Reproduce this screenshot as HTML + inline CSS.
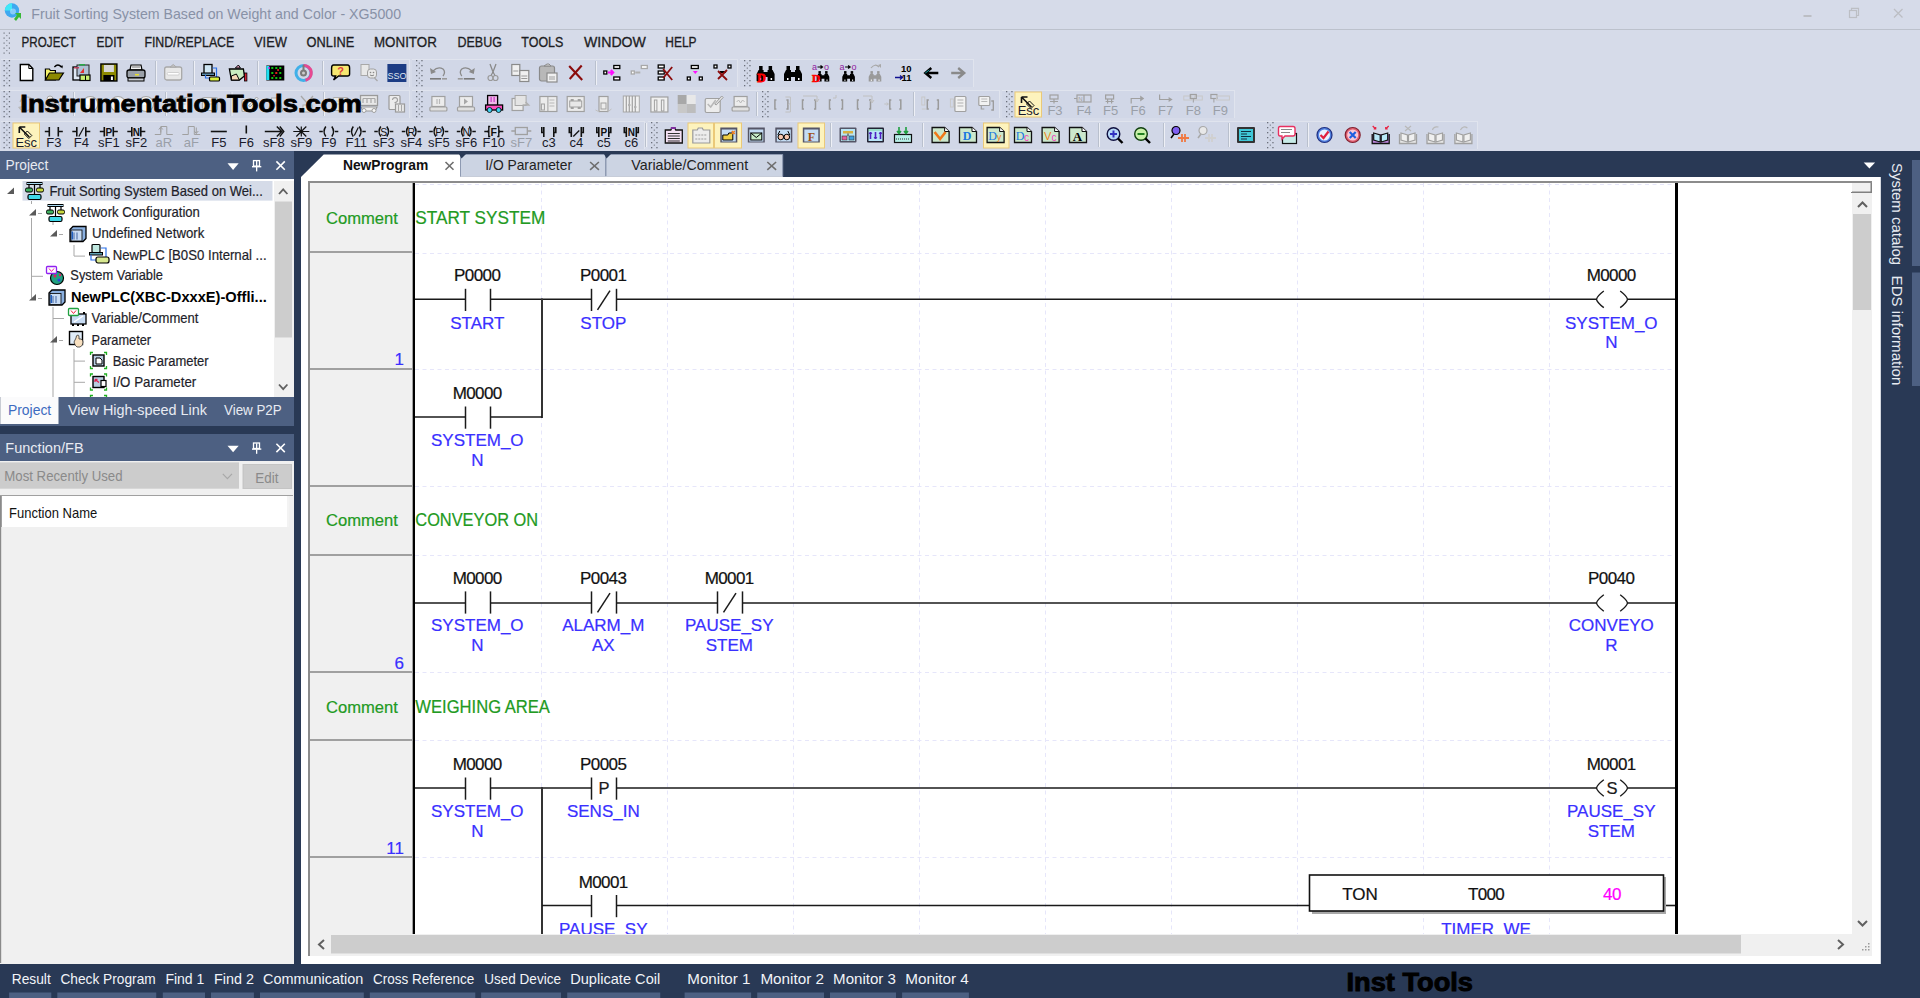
<!DOCTYPE html>
<html><head><meta charset="utf-8">
<style>
*{margin:0;padding:0;box-sizing:border-box}
html,body{width:1920px;height:998px;overflow:hidden;background:#293955;font-family:"Liberation Sans",sans-serif}
.a{position:absolute}
.t{position:absolute;white-space:nowrap}
svg{overflow:hidden}
</style></head><body>
<div class="a" style="left:0;top:0;width:1920px;height:151px;background:#d6dbe9"></div><svg class="a" style="left:0;top:0" width="1920" height="151" font-family="Liberation Sans, sans-serif"><rect x="1" y="59" width="409" height="28" fill="#d1d7e7"/><rect x="1" y="59" width="409" height="1" fill="#e0e4ee"/><rect x="409" y="59" width="1" height="28" fill="#e0e4ee"/><rect x="412" y="59" width="326" height="28" fill="#d1d7e7"/><rect x="412" y="59" width="326" height="1" fill="#e0e4ee"/><rect x="737" y="59" width="1" height="28" fill="#e0e4ee"/><rect x="740" y="59" width="234" height="28" fill="#d1d7e7"/><rect x="740" y="59" width="234" height="1" fill="#e0e4ee"/><rect x="973" y="59" width="1" height="28" fill="#e0e4ee"/><rect x="1" y="90" width="409" height="28" fill="#d1d7e7"/><rect x="1" y="90" width="409" height="1" fill="#e0e4ee"/><rect x="409" y="90" width="1" height="28" fill="#e0e4ee"/><rect x="412" y="90" width="588" height="28" fill="#d1d7e7"/><rect x="412" y="90" width="588" height="1" fill="#e0e4ee"/><rect x="999" y="90" width="1" height="28" fill="#e0e4ee"/><rect x="1002" y="90" width="233" height="28" fill="#d1d7e7"/><rect x="1002" y="90" width="233" height="1" fill="#e0e4ee"/><rect x="1234" y="90" width="1" height="28" fill="#e0e4ee"/><rect x="1" y="121" width="644" height="28" fill="#d1d7e7"/><rect x="1" y="121" width="644" height="1" fill="#e0e4ee"/><rect x="644" y="121" width="1" height="28" fill="#e0e4ee"/><rect x="648" y="121" width="830" height="28" fill="#d1d7e7"/><rect x="648" y="121" width="830" height="1" fill="#e0e4ee"/><rect x="1477" y="121" width="1" height="28" fill="#e0e4ee"/><rect x="3.5" y="60" width="1.3" height="1.3" fill="#6a6f7a"/><rect x="8.8" y="60" width="1.3" height="1.3" fill="#6a6f7a"/><rect x="6.2" y="62.5" width="1.3" height="1.3" fill="#8a8f9a"/><rect x="3.5" y="65" width="1.3" height="1.3" fill="#6a6f7a"/><rect x="8.8" y="65" width="1.3" height="1.3" fill="#6a6f7a"/><rect x="6.2" y="67.5" width="1.3" height="1.3" fill="#8a8f9a"/><rect x="3.5" y="70" width="1.3" height="1.3" fill="#6a6f7a"/><rect x="8.8" y="70" width="1.3" height="1.3" fill="#6a6f7a"/><rect x="6.2" y="72.5" width="1.3" height="1.3" fill="#8a8f9a"/><rect x="3.5" y="75" width="1.3" height="1.3" fill="#6a6f7a"/><rect x="8.8" y="75" width="1.3" height="1.3" fill="#6a6f7a"/><rect x="6.2" y="77.5" width="1.3" height="1.3" fill="#8a8f9a"/><rect x="3.5" y="80" width="1.3" height="1.3" fill="#6a6f7a"/><rect x="8.8" y="80" width="1.3" height="1.3" fill="#6a6f7a"/><rect x="6.2" y="82.5" width="1.3" height="1.3" fill="#8a8f9a"/><rect x="3.5" y="85" width="1.3" height="1.3" fill="#6a6f7a"/><rect x="8.8" y="85" width="1.3" height="1.3" fill="#6a6f7a"/><rect x="3.5" y="91" width="1.3" height="1.3" fill="#6a6f7a"/><rect x="8.8" y="91" width="1.3" height="1.3" fill="#6a6f7a"/><rect x="6.2" y="93.5" width="1.3" height="1.3" fill="#8a8f9a"/><rect x="3.5" y="96" width="1.3" height="1.3" fill="#6a6f7a"/><rect x="8.8" y="96" width="1.3" height="1.3" fill="#6a6f7a"/><rect x="6.2" y="98.5" width="1.3" height="1.3" fill="#8a8f9a"/><rect x="3.5" y="101" width="1.3" height="1.3" fill="#6a6f7a"/><rect x="8.8" y="101" width="1.3" height="1.3" fill="#6a6f7a"/><rect x="6.2" y="103.5" width="1.3" height="1.3" fill="#8a8f9a"/><rect x="3.5" y="106" width="1.3" height="1.3" fill="#6a6f7a"/><rect x="8.8" y="106" width="1.3" height="1.3" fill="#6a6f7a"/><rect x="6.2" y="108.5" width="1.3" height="1.3" fill="#8a8f9a"/><rect x="3.5" y="111" width="1.3" height="1.3" fill="#6a6f7a"/><rect x="8.8" y="111" width="1.3" height="1.3" fill="#6a6f7a"/><rect x="6.2" y="113.5" width="1.3" height="1.3" fill="#8a8f9a"/><rect x="3.5" y="116" width="1.3" height="1.3" fill="#6a6f7a"/><rect x="8.8" y="116" width="1.3" height="1.3" fill="#6a6f7a"/><rect x="3.5" y="122" width="1.3" height="1.3" fill="#6a6f7a"/><rect x="8.8" y="122" width="1.3" height="1.3" fill="#6a6f7a"/><rect x="6.2" y="124.5" width="1.3" height="1.3" fill="#8a8f9a"/><rect x="3.5" y="127" width="1.3" height="1.3" fill="#6a6f7a"/><rect x="8.8" y="127" width="1.3" height="1.3" fill="#6a6f7a"/><rect x="6.2" y="129.5" width="1.3" height="1.3" fill="#8a8f9a"/><rect x="3.5" y="132" width="1.3" height="1.3" fill="#6a6f7a"/><rect x="8.8" y="132" width="1.3" height="1.3" fill="#6a6f7a"/><rect x="6.2" y="134.5" width="1.3" height="1.3" fill="#8a8f9a"/><rect x="3.5" y="137" width="1.3" height="1.3" fill="#6a6f7a"/><rect x="8.8" y="137" width="1.3" height="1.3" fill="#6a6f7a"/><rect x="6.2" y="139.5" width="1.3" height="1.3" fill="#8a8f9a"/><rect x="3.5" y="142" width="1.3" height="1.3" fill="#6a6f7a"/><rect x="8.8" y="142" width="1.3" height="1.3" fill="#6a6f7a"/><rect x="6.2" y="144.5" width="1.3" height="1.3" fill="#8a8f9a"/><rect x="3.5" y="147" width="1.3" height="1.3" fill="#6a6f7a"/><rect x="8.8" y="147" width="1.3" height="1.3" fill="#6a6f7a"/><rect x="416" y="60" width="1.3" height="1.3" fill="#6a6f7a"/><rect x="421.3" y="60" width="1.3" height="1.3" fill="#6a6f7a"/><rect x="418.7" y="62.5" width="1.3" height="1.3" fill="#8a8f9a"/><rect x="416" y="65" width="1.3" height="1.3" fill="#6a6f7a"/><rect x="421.3" y="65" width="1.3" height="1.3" fill="#6a6f7a"/><rect x="418.7" y="67.5" width="1.3" height="1.3" fill="#8a8f9a"/><rect x="416" y="70" width="1.3" height="1.3" fill="#6a6f7a"/><rect x="421.3" y="70" width="1.3" height="1.3" fill="#6a6f7a"/><rect x="418.7" y="72.5" width="1.3" height="1.3" fill="#8a8f9a"/><rect x="416" y="75" width="1.3" height="1.3" fill="#6a6f7a"/><rect x="421.3" y="75" width="1.3" height="1.3" fill="#6a6f7a"/><rect x="418.7" y="77.5" width="1.3" height="1.3" fill="#8a8f9a"/><rect x="416" y="80" width="1.3" height="1.3" fill="#6a6f7a"/><rect x="421.3" y="80" width="1.3" height="1.3" fill="#6a6f7a"/><rect x="418.7" y="82.5" width="1.3" height="1.3" fill="#8a8f9a"/><rect x="416" y="85" width="1.3" height="1.3" fill="#6a6f7a"/><rect x="421.3" y="85" width="1.3" height="1.3" fill="#6a6f7a"/><rect x="416" y="91" width="1.3" height="1.3" fill="#6a6f7a"/><rect x="421.3" y="91" width="1.3" height="1.3" fill="#6a6f7a"/><rect x="418.7" y="93.5" width="1.3" height="1.3" fill="#8a8f9a"/><rect x="416" y="96" width="1.3" height="1.3" fill="#6a6f7a"/><rect x="421.3" y="96" width="1.3" height="1.3" fill="#6a6f7a"/><rect x="418.7" y="98.5" width="1.3" height="1.3" fill="#8a8f9a"/><rect x="416" y="101" width="1.3" height="1.3" fill="#6a6f7a"/><rect x="421.3" y="101" width="1.3" height="1.3" fill="#6a6f7a"/><rect x="418.7" y="103.5" width="1.3" height="1.3" fill="#8a8f9a"/><rect x="416" y="106" width="1.3" height="1.3" fill="#6a6f7a"/><rect x="421.3" y="106" width="1.3" height="1.3" fill="#6a6f7a"/><rect x="418.7" y="108.5" width="1.3" height="1.3" fill="#8a8f9a"/><rect x="416" y="111" width="1.3" height="1.3" fill="#6a6f7a"/><rect x="421.3" y="111" width="1.3" height="1.3" fill="#6a6f7a"/><rect x="418.7" y="113.5" width="1.3" height="1.3" fill="#8a8f9a"/><rect x="416" y="116" width="1.3" height="1.3" fill="#6a6f7a"/><rect x="421.3" y="116" width="1.3" height="1.3" fill="#6a6f7a"/><rect x="744" y="60" width="1.3" height="1.3" fill="#6a6f7a"/><rect x="749.3" y="60" width="1.3" height="1.3" fill="#6a6f7a"/><rect x="746.7" y="62.5" width="1.3" height="1.3" fill="#8a8f9a"/><rect x="744" y="65" width="1.3" height="1.3" fill="#6a6f7a"/><rect x="749.3" y="65" width="1.3" height="1.3" fill="#6a6f7a"/><rect x="746.7" y="67.5" width="1.3" height="1.3" fill="#8a8f9a"/><rect x="744" y="70" width="1.3" height="1.3" fill="#6a6f7a"/><rect x="749.3" y="70" width="1.3" height="1.3" fill="#6a6f7a"/><rect x="746.7" y="72.5" width="1.3" height="1.3" fill="#8a8f9a"/><rect x="744" y="75" width="1.3" height="1.3" fill="#6a6f7a"/><rect x="749.3" y="75" width="1.3" height="1.3" fill="#6a6f7a"/><rect x="746.7" y="77.5" width="1.3" height="1.3" fill="#8a8f9a"/><rect x="744" y="80" width="1.3" height="1.3" fill="#6a6f7a"/><rect x="749.3" y="80" width="1.3" height="1.3" fill="#6a6f7a"/><rect x="746.7" y="82.5" width="1.3" height="1.3" fill="#8a8f9a"/><rect x="744" y="85" width="1.3" height="1.3" fill="#6a6f7a"/><rect x="749.3" y="85" width="1.3" height="1.3" fill="#6a6f7a"/><rect x="762" y="91" width="1.3" height="1.3" fill="#6a6f7a"/><rect x="767.3" y="91" width="1.3" height="1.3" fill="#6a6f7a"/><rect x="764.7" y="93.5" width="1.3" height="1.3" fill="#8a8f9a"/><rect x="762" y="96" width="1.3" height="1.3" fill="#6a6f7a"/><rect x="767.3" y="96" width="1.3" height="1.3" fill="#6a6f7a"/><rect x="764.7" y="98.5" width="1.3" height="1.3" fill="#8a8f9a"/><rect x="762" y="101" width="1.3" height="1.3" fill="#6a6f7a"/><rect x="767.3" y="101" width="1.3" height="1.3" fill="#6a6f7a"/><rect x="764.7" y="103.5" width="1.3" height="1.3" fill="#8a8f9a"/><rect x="762" y="106" width="1.3" height="1.3" fill="#6a6f7a"/><rect x="767.3" y="106" width="1.3" height="1.3" fill="#6a6f7a"/><rect x="764.7" y="108.5" width="1.3" height="1.3" fill="#8a8f9a"/><rect x="762" y="111" width="1.3" height="1.3" fill="#6a6f7a"/><rect x="767.3" y="111" width="1.3" height="1.3" fill="#6a6f7a"/><rect x="764.7" y="113.5" width="1.3" height="1.3" fill="#8a8f9a"/><rect x="762" y="116" width="1.3" height="1.3" fill="#6a6f7a"/><rect x="767.3" y="116" width="1.3" height="1.3" fill="#6a6f7a"/><rect x="1006" y="91" width="1.3" height="1.3" fill="#6a6f7a"/><rect x="1011.3" y="91" width="1.3" height="1.3" fill="#6a6f7a"/><rect x="1008.7" y="93.5" width="1.3" height="1.3" fill="#8a8f9a"/><rect x="1006" y="96" width="1.3" height="1.3" fill="#6a6f7a"/><rect x="1011.3" y="96" width="1.3" height="1.3" fill="#6a6f7a"/><rect x="1008.7" y="98.5" width="1.3" height="1.3" fill="#8a8f9a"/><rect x="1006" y="101" width="1.3" height="1.3" fill="#6a6f7a"/><rect x="1011.3" y="101" width="1.3" height="1.3" fill="#6a6f7a"/><rect x="1008.7" y="103.5" width="1.3" height="1.3" fill="#8a8f9a"/><rect x="1006" y="106" width="1.3" height="1.3" fill="#6a6f7a"/><rect x="1011.3" y="106" width="1.3" height="1.3" fill="#6a6f7a"/><rect x="1008.7" y="108.5" width="1.3" height="1.3" fill="#8a8f9a"/><rect x="1006" y="111" width="1.3" height="1.3" fill="#6a6f7a"/><rect x="1011.3" y="111" width="1.3" height="1.3" fill="#6a6f7a"/><rect x="1008.7" y="113.5" width="1.3" height="1.3" fill="#8a8f9a"/><rect x="1006" y="116" width="1.3" height="1.3" fill="#6a6f7a"/><rect x="1011.3" y="116" width="1.3" height="1.3" fill="#6a6f7a"/><rect x="651" y="122" width="1.3" height="1.3" fill="#6a6f7a"/><rect x="656.3" y="122" width="1.3" height="1.3" fill="#6a6f7a"/><rect x="653.7" y="124.5" width="1.3" height="1.3" fill="#8a8f9a"/><rect x="651" y="127" width="1.3" height="1.3" fill="#6a6f7a"/><rect x="656.3" y="127" width="1.3" height="1.3" fill="#6a6f7a"/><rect x="653.7" y="129.5" width="1.3" height="1.3" fill="#8a8f9a"/><rect x="651" y="132" width="1.3" height="1.3" fill="#6a6f7a"/><rect x="656.3" y="132" width="1.3" height="1.3" fill="#6a6f7a"/><rect x="653.7" y="134.5" width="1.3" height="1.3" fill="#8a8f9a"/><rect x="651" y="137" width="1.3" height="1.3" fill="#6a6f7a"/><rect x="656.3" y="137" width="1.3" height="1.3" fill="#6a6f7a"/><rect x="653.7" y="139.5" width="1.3" height="1.3" fill="#8a8f9a"/><rect x="651" y="142" width="1.3" height="1.3" fill="#6a6f7a"/><rect x="656.3" y="142" width="1.3" height="1.3" fill="#6a6f7a"/><rect x="653.7" y="144.5" width="1.3" height="1.3" fill="#8a8f9a"/><rect x="651" y="147" width="1.3" height="1.3" fill="#6a6f7a"/><rect x="656.3" y="147" width="1.3" height="1.3" fill="#6a6f7a"/><rect x="1267" y="122" width="1.3" height="1.3" fill="#6a6f7a"/><rect x="1272.3" y="122" width="1.3" height="1.3" fill="#6a6f7a"/><rect x="1269.7" y="124.5" width="1.3" height="1.3" fill="#8a8f9a"/><rect x="1267" y="127" width="1.3" height="1.3" fill="#6a6f7a"/><rect x="1272.3" y="127" width="1.3" height="1.3" fill="#6a6f7a"/><rect x="1269.7" y="129.5" width="1.3" height="1.3" fill="#8a8f9a"/><rect x="1267" y="132" width="1.3" height="1.3" fill="#6a6f7a"/><rect x="1272.3" y="132" width="1.3" height="1.3" fill="#6a6f7a"/><rect x="1269.7" y="134.5" width="1.3" height="1.3" fill="#8a8f9a"/><rect x="1267" y="137" width="1.3" height="1.3" fill="#6a6f7a"/><rect x="1272.3" y="137" width="1.3" height="1.3" fill="#6a6f7a"/><rect x="1269.7" y="139.5" width="1.3" height="1.3" fill="#8a8f9a"/><rect x="1267" y="142" width="1.3" height="1.3" fill="#6a6f7a"/><rect x="1272.3" y="142" width="1.3" height="1.3" fill="#6a6f7a"/><rect x="1269.7" y="144.5" width="1.3" height="1.3" fill="#8a8f9a"/><rect x="1267" y="147" width="1.3" height="1.3" fill="#6a6f7a"/><rect x="1272.3" y="147" width="1.3" height="1.3" fill="#6a6f7a"/><rect x="155" y="61" width="1" height="24" fill="#b9c0cd"/><rect x="156" y="61" width="1" height="24" fill="#eef0f6"/><rect x="193" y="61" width="1" height="24" fill="#b9c0cd"/><rect x="194" y="61" width="1" height="24" fill="#eef0f6"/><rect x="257" y="61" width="1" height="24" fill="#b9c0cd"/><rect x="258" y="61" width="1" height="24" fill="#eef0f6"/><rect x="322" y="61" width="1" height="24" fill="#b9c0cd"/><rect x="323" y="61" width="1" height="24" fill="#eef0f6"/><rect x="595" y="61" width="1" height="24" fill="#b9c0cd"/><rect x="596" y="61" width="1" height="24" fill="#eef0f6"/><rect x="73" y="92" width="1" height="24" fill="#b9c0cd"/><rect x="74" y="92" width="1" height="24" fill="#eef0f6"/><rect x="165" y="92" width="1" height="24" fill="#b9c0cd"/><rect x="166" y="92" width="1" height="24" fill="#eef0f6"/><rect x="230.5" y="92" width="1" height="24" fill="#b9c0cd"/><rect x="231.5" y="92" width="1" height="24" fill="#eef0f6"/><rect x="323" y="92" width="1" height="24" fill="#b9c0cd"/><rect x="324" y="92" width="1" height="24" fill="#eef0f6"/><rect x="756" y="92" width="1" height="24" fill="#b9c0cd"/><rect x="757" y="92" width="1" height="24" fill="#eef0f6"/><rect x="913" y="92" width="1" height="24" fill="#b9c0cd"/><rect x="914" y="92" width="1" height="24" fill="#eef0f6"/><rect x="645" y="123" width="1" height="24" fill="#b9c0cd"/><rect x="646" y="123" width="1" height="24" fill="#eef0f6"/><rect x="830" y="123" width="1" height="24" fill="#b9c0cd"/><rect x="831" y="123" width="1" height="24" fill="#eef0f6"/><rect x="922" y="123" width="1" height="24" fill="#b9c0cd"/><rect x="923" y="123" width="1" height="24" fill="#eef0f6"/><rect x="1098" y="123" width="1" height="24" fill="#b9c0cd"/><rect x="1099" y="123" width="1" height="24" fill="#eef0f6"/><rect x="1163" y="123" width="1" height="24" fill="#b9c0cd"/><rect x="1164" y="123" width="1" height="24" fill="#eef0f6"/><rect x="1228" y="123" width="1" height="24" fill="#b9c0cd"/><rect x="1229" y="123" width="1" height="24" fill="#eef0f6"/><rect x="1307" y="123" width="1" height="24" fill="#b9c0cd"/><rect x="1308" y="123" width="1" height="24" fill="#eef0f6"/><rect x="13.0" y="123.0" width="26.5" height="25.0" fill="#fdf3bd" stroke="#ebc978" stroke-width="1"/><rect x="688.0" y="123.0" width="25.5" height="25.0" fill="#fdf3bd" stroke="#ebc978" stroke-width="1"/><rect x="714.5" y="123.0" width="27" height="25.0" fill="#fdf3bd" stroke="#ebc978" stroke-width="1"/><rect x="798.0" y="123.0" width="26.5" height="25.0" fill="#fdf3bd" stroke="#ebc978" stroke-width="1"/><rect x="983.5" y="123.0" width="25.5" height="25.0" fill="#fdf3bd" stroke="#ebc978" stroke-width="1"/><rect x="1015.0" y="92.0" width="26.5" height="25.0" fill="#fdf3bd" stroke="#ebc978" stroke-width="1"/><g transform="translate(16.8,63)"><path d="M3.5 1.5H12L16 5.5V17.5H3.5Z" fill="#fff" stroke="#000" stroke-width="1.4"/><path d="M12 1.5V5.5H16" fill="none" stroke="#000" stroke-width="1"/></g><g transform="translate(44.4,63)"><path d="M1 6H5L6 7.5H11V17H1Z" fill="#f4f26a" stroke="#000" stroke-width="1.2"/><path d="M1 17L5 10H19L14.5 17Z" fill="#8d8a00" stroke="#000" stroke-width="1.2"/><path d="M10 4Q13.5 0 17 4" fill="none" stroke="#000" stroke-width="1.3"/><path d="M15.5 3L18 5.5L18.5 2.5Z" fill="#000"/></g><g transform="translate(72,63)"><rect x="1" y="4" width="11" height="13" fill="#dfe9f5" stroke="#000" stroke-width="1.3"/><rect x="5" y="2" width="12" height="11" fill="#aebfd4" stroke="#222" stroke-width="1"/><rect x="2" y="4" width="5" height="1.5" fill="#b8405a"/><rect x="7" y="1" width="6" height="1.6" fill="#2aa84a"/><rect x="8" y="12" width="10" height="5.5" fill="#c8f070" stroke="#000" stroke-width="1.2"/><rect x="13" y="12.5" width="1" height="4.5" fill="#000"/><path d="M12 5L12 10L8 10Z" fill="#e03030"/></g><g transform="translate(98.9,63)"><rect x="2" y="1" width="16" height="17" fill="#8d8a00" stroke="#000" stroke-width="1.4"/><rect x="5" y="2" width="10" height="7" fill="#d8d8d8"/><rect x="4.5" y="12" width="11" height="6" fill="#000"/><rect x="12" y="13.5" width="2" height="3.5" fill="#fff"/></g><g transform="translate(126,63)"><path d="M5 2H15L16 7H4Z" fill="#f4f4f4" stroke="#000" stroke-width="1.2"/><rect x="1" y="7" width="18" height="8" rx="2" fill="#9aa0a8" stroke="#000" stroke-width="1.3"/><rect x="2" y="15" width="16" height="3" fill="#c8ccd2" stroke="#000" stroke-width="1"/><rect x="9" y="11" width="4" height="1.5" fill="#e8e030"/><line x1="6" y1="4" x2="14" y2="4" stroke="#555" stroke-width="0.8"/></g><g transform="translate(163.2,63)"><rect x="1.5" y="4" width="17" height="13" rx="2" fill="#e8e8e8" stroke="#a8a8a8" stroke-width="1.3"/><path d="M7 4L10 1.5L13 4Z" fill="#c8c8c8" stroke="#a8a8a8"/><rect x="4" y="9.5" width="12" height="2.5" rx="1" fill="#fff" stroke="#c8c8c8" stroke-width="0.8"/></g><g transform="translate(200.5,63)"><rect x="3.5" y="1.5" width="8" height="9" fill="#cfe6f4" stroke="#000" stroke-width="1.3"/><rect x="1" y="10" width="13" height="2.5" fill="#5a8aa8" stroke="#000" stroke-width="1"/><path d="M12 5H16V15H5V12" fill="none" stroke="#2a70e8" stroke-width="1.2"/><rect x="9" y="14" width="10" height="4" rx="1" fill="#d8f040" stroke="#000" stroke-width="1.2"/></g><g transform="translate(228.4,63)"><path d="M1 6H15L16 13L11 17H3Z" fill="#c8ecc0" stroke="#000" stroke-width="1.3"/><path d="M7 5L10 2L12 5Z" fill="#e8a0c0" stroke="#000" stroke-width="1"/><path d="M3 13L8 11L11 17H3Z" fill="#f4d8b8" stroke="#000" stroke-width="1"/><rect x="16" y="10" width="2.5" height="8" fill="#d02030" stroke="#000" stroke-width="0.8"/></g><g transform="translate(265.3,63)"><rect x="1" y="2.5" width="18" height="15" fill="#000"/><rect x="1" y="3" width="3" height="14" fill="#20e0f0"/><g fill="#10c010"><rect x="6" y="4" width="2" height="2"/><rect x="10" y="4" width="2" height="2"/><rect x="14" y="4" width="2" height="2"/><rect x="6" y="9" width="2" height="2"/><rect x="14" y="9" width="2" height="2"/><rect x="6" y="14" width="2" height="2"/><rect x="10" y="14" width="2" height="2"/><rect x="14" y="14" width="2" height="2"/></g><g fill="#e02020"><rect x="10" y="9" width="2" height="2"/><rect x="12" y="6" width="1.5" height="2"/><rect x="8" y="12" width="1.5" height="1.5"/></g><rect x="3" y="4" width="1.5" height="2" fill="#e020e0"/></g><g transform="translate(293.5,63)"><circle cx="10" cy="10" r="7.5" fill="none" stroke="#40b0e8" stroke-width="3"/><path d="M10 2.5A7.5 7.5 0 0 1 12 17.3" fill="none" stroke="#e84890" stroke-width="3"/><circle cx="10" cy="10" r="3.5" fill="#7a7a7a"/><circle cx="10" cy="10" r="1.5" fill="#ccc"/><rect x="9" y="2" width="2" height="5" fill="#7a7a7a"/></g><g transform="translate(330.6,63)"><path d="M3 2H17Q19 2 19 5V11Q19 13 17 13H8L3 17L5 13H3Q1 13 1 11V5Q1 2 3 2Z" fill="#f7e870" stroke="#000" stroke-width="1.4"/><text x="10" y="11.5" font-size="11" fill="#e04040" text-anchor="middle" font-weight="bold">?</text></g><g transform="translate(359.5,63)"><rect x="1.5" y="1.5" width="8" height="11" fill="#e8e8e8" stroke="#a8a8a8"/><rect x="8" y="6" width="9" height="9" rx="3" fill="#e8e8e8" stroke="#a0a0a0"/><circle cx="11" cy="9.5" r="0.8" fill="#888"/><circle cx="14" cy="9.5" r="0.8" fill="#888"/><path d="M10.5 12Q12.5 13.5 14.5 12" fill="none" stroke="#888"/><path d="M15 15L18 18" stroke="#a8a8a8" stroke-width="1.3"/></g><g transform="translate(386.9,63)"><rect x="0.5" y="1" width="19" height="18" fill="#1c3c84"/><text x="10" y="15.5" font-size="9" fill="#dfe6f2" text-anchor="middle">SSO</text></g><g transform="translate(428,63)"><path d="M5 8Q10 3 15 6Q18 9 15 13" fill="none" stroke="#8a8a8a" stroke-width="1.3"/><path d="M2 5L3 11L8 9Z" fill="#8a8a8a"/><rect x="2" y="15" width="11" height="1.6" fill="#7a7a7a"/><rect x="14" y="15" width="5" height="1.6" fill="#9a9a9a"/></g><g transform="translate(456.8,63)"><path d="M15 8Q10 3 5 6Q2 9 5 13" fill="none" stroke="#8a8a8a" stroke-width="1.3"/><path d="M18 5L17 11L12 9Z" fill="#8a8a8a"/><rect x="7" y="15" width="11" height="1.6" fill="#7a7a7a"/><rect x="1" y="15" width="5" height="1.6" fill="#9a9a9a"/></g><g transform="translate(483,63)"><path d="M7 1L10 9L13 1" fill="none" stroke="#8a8a8a" stroke-width="1.3"/><circle cx="7.5" cy="15" r="2.5" fill="none" stroke="#9a9a9a" stroke-width="1.2"/><circle cx="12.5" cy="15" r="2.5" fill="none" stroke="#9a9a9a" stroke-width="1.2"/><path d="M10 9L8 12.5M10 9L12 12.5" stroke="#8a8a8a" stroke-width="1.2"/></g><g transform="translate(510.29999999999995,63)"><rect x="1.5" y="1.5" width="8" height="11" fill="#f0f0f0" stroke="#8a8a8a" stroke-width="1.2"/><rect x="9.5" y="7.5" width="9" height="11" fill="#f0f0f0" stroke="#8a8a8a" stroke-width="1.2"/><path d="M3 8H8M11 13H17M11 15.5H17" stroke="#9a9a9a"/></g><g transform="translate(538,63)"><rect x="1.5" y="3" width="15" height="15" rx="2" fill="#b8b8b8" stroke="#8a8a8a" stroke-width="1.2"/><path d="M6 3L9 1H11L13 3Z" fill="#d8d8d8" stroke="#8a8a8a"/><rect x="9" y="10" width="10" height="9" fill="#f0f0f0" stroke="#8a8a8a" stroke-width="1.2"/><path d="M11 14H17M11 16H17" stroke="#a0a0a0"/></g><g transform="translate(565.7,63)"><path d="M3.5 3L16.5 17M16 2.5L4 16" stroke="#8b0c0c" stroke-width="2.1"/></g><g transform="translate(602.8,63)"><rect x="1" y="8" width="3" height="3" fill="#fff" stroke="#000" stroke-width="1.3"/><rect x="11" y="2.5" width="6" height="3" fill="#fff" stroke="#000" stroke-width="1.3"/><rect x="11" y="14" width="6" height="3" fill="#fff" stroke="#000" stroke-width="1.3"/><path d="M5 9.5H10M8 7L10.5 9.5L8 12" stroke="#ff10ff" stroke-width="2" fill="none"/></g><g transform="translate(630.3,63)"><rect x="1" y="8" width="3" height="3" fill="#fff" stroke="#a8a8a8" stroke-width="1.3"/><rect x="11" y="2.5" width="6" height="3" fill="#fff" stroke="#a8a8a8" stroke-width="1.3"/><path d="M5 9.5H10" stroke="#b0b0b0" stroke-width="2"/></g><g transform="translate(657.2,63)"><rect x="1" y="2" width="6" height="3" fill="#fff" stroke="#000" stroke-width="1.3"/><rect x="1" y="8" width="6" height="3" fill="#fff" stroke="#000" stroke-width="1.3"/><rect x="1" y="14" width="6" height="3" fill="#fff" stroke="#000" stroke-width="1.3"/><path d="M6 6L15 17M15 4L6 15" stroke="#8b0c0c" stroke-width="1.8"/></g><g transform="translate(685.3,63)"><rect x="6" y="2.5" width="7" height="3" fill="#fff" stroke="#000" stroke-width="1.3"/><rect x="2" y="14" width="3" height="3" fill="#fff" stroke="#000" stroke-width="1.3"/><rect x="14" y="14" width="3" height="3" fill="#fff" stroke="#000" stroke-width="1.3"/><path d="M7.5 8H12.5L10 11Z" fill="#ff10ff"/></g><g transform="translate(713,63)"><rect x="1" y="2" width="3" height="3" fill="#fff" stroke="#000" stroke-width="1.3"/><rect x="15" y="2" width="3" height="3" fill="#fff" stroke="#000" stroke-width="1.3"/><rect x="7" y="8" width="6" height="2" fill="#000"/><path d="M5 8L14 17M14 7L5 16" stroke="#8b0c0c" stroke-width="1.8"/></g><g transform="translate(755.6,63)"><path d="M3 7H8V18H1V11Z M12 7H17L19 11V18H12Z M7 9H13V14H7Z" fill="#000"/><rect x="3.5" y="3" width="3.5" height="4" fill="#000"/><rect x="13" y="3" width="3.5" height="4" fill="#000"/><rect x="4" y="15" width="1.5" height="2" fill="#fff"/><rect x="15" y="15" width="1.5" height="2" fill="#fff"/><text x="6" y="19" font-size="12" font-weight="bold" fill="#ff0000" font-family="Liberation Serif" text-anchor="middle" stroke="#ff0000" stroke-width="0.8">D</text></g><g transform="translate(783,63)"><path d="M3 7H8V18H1V11Z M12 7H17L19 11V18H12Z M7 9H13V14H7Z" fill="#000"/><rect x="3.5" y="3" width="3.5" height="4" fill="#000"/><rect x="13" y="3" width="3.5" height="4" fill="#000"/><rect x="4" y="15" width="1.5" height="2" fill="#fff"/><rect x="15" y="15" width="1.5" height="2" fill="#fff"/></g><g transform="translate(811,63)"><g transform="translate(5,6) scale(0.7)"><path d="M3 7H8V18H1V11Z M12 7H17L19 11V18H12Z M7 9H13V14H7Z" fill="#000"/><rect x="3.5" y="3" width="3.5" height="4" fill="#000"/><rect x="13" y="3" width="3.5" height="4" fill="#000"/><rect x="4" y="15" width="1.5" height="2" fill="#fff"/><rect x="15" y="15" width="1.5" height="2" fill="#fff"/></g><text x="1" y="7" font-size="9" fill="#9020a0">a</text><text x="13" y="7" font-size="9" fill="#9020a0">o</text><path d="M6.5 4H11M9.5 2.5L11.5 4L9.5 5.5" stroke="#000" stroke-width="1.2" fill="none"/><text x="5" y="19" font-size="11" font-weight="bold" fill="#ff0000" font-family="Liberation Serif" text-anchor="middle" stroke="#ff0000" stroke-width="0.7">D</text></g><g transform="translate(838.6,63)"><g transform="translate(3,6) scale(0.7)"><path d="M3 7H8V18H1V11Z M12 7H17L19 11V18H12Z M7 9H13V14H7Z" fill="#000"/><rect x="3.5" y="3" width="3.5" height="4" fill="#000"/><rect x="13" y="3" width="3.5" height="4" fill="#000"/><rect x="4" y="15" width="1.5" height="2" fill="#fff"/><rect x="15" y="15" width="1.5" height="2" fill="#fff"/></g><text x="1" y="7" font-size="9" fill="#9020a0">a</text><text x="13" y="7" font-size="9" fill="#9020a0">o</text><path d="M6.5 4H11M9.5 2.5L11.5 4L9.5 5.5" stroke="#000" stroke-width="1.2" fill="none"/></g><g transform="translate(865,63)"><g transform="translate(3,6) scale(0.7)"><path d="M3 7H8V18H1V11Z M12 7H17L19 11V18H12Z M7 9H13V14H7Z" fill="#9a9a9a"/><rect x="3.5" y="3" width="3.5" height="4" fill="#9a9a9a"/><rect x="13" y="3" width="3.5" height="4" fill="#9a9a9a"/><rect x="4" y="15" width="1.5" height="2" fill="#fff"/><rect x="15" y="15" width="1.5" height="2" fill="#fff"/></g><path d="M6 5Q10 0 14 4" fill="none" stroke="#a8a8a8" stroke-width="1.2"/><path d="M13 2L16 5L16 1Z" fill="#a8a8a8"/></g><g transform="translate(894,63)"><text x="17.5" y="8.5" font-size="9.5" fill="#000" text-anchor="end" font-weight="bold">10</text><text x="17.5" y="18" font-size="9.5" fill="#000" text-anchor="end" font-weight="bold">11</text><path d="M1 14.5H8M6 12.5L8.5 14.5L6 16.5" stroke="#101090" stroke-width="1.3" fill="none"/></g><g transform="translate(921.3,63)"><path d="M17 10H5M10 5L4 10L10 15" stroke="#000" stroke-width="2.4" fill="none"/><path d="M4 10L8 7" stroke="#10a0a0" stroke-width="1"/></g><g transform="translate(948.2,63)"><path d="M3 10H15M10 5L16 10L10 15" stroke="#8a8a8a" stroke-width="2.4" fill="none"/></g><g transform="translate(16,94)"><path d="M4 8Q6 3 11 3Q15 3 17 7M16 12Q14 17 9 17Q5 17 3 13" fill="none" stroke="#b8b8b8" stroke-width="1.3"/><path d="M15 4L18 7L14 8Z M5 16L2 13L6 12Z" fill="#b8b8b8"/></g><g transform="translate(42,94)"><circle cx="8" cy="5" r="3" fill="#f0f0f0" stroke="#a8a8a8"/><rect x="3" y="9" width="14" height="9" rx="2" fill="#e0e0e0" stroke="#a8a8a8"/></g><g transform="translate(80.3,94)"><circle cx="10" cy="10" r="7.5" fill="#f4f4f4" stroke="#a8a8a8" stroke-width="1.2"/><circle cx="8" cy="8" r="3" fill="#fff"/></g><g transform="translate(108,94)"><circle cx="10" cy="10" r="7.5" fill="#f4f4f4" stroke="#a8a8a8" stroke-width="1.2"/><circle cx="8" cy="8" r="3" fill="#fff"/></g><g transform="translate(136,94)"><circle cx="10" cy="10" r="7.5" fill="#f4f4f4" stroke="#a8a8a8" stroke-width="1.2"/><circle cx="8" cy="8" r="3" fill="#fff"/></g><g transform="translate(173.5,94)"><rect x="2.5" y="3.5" width="15" height="13" rx="1.5" fill="#ececec" stroke="#b0b0b0" stroke-width="1.2"/><path d="M5 7H15M5 10H12" stroke="#c8c8c8"/></g><g transform="translate(200,94)"><rect x="2.5" y="3.5" width="15" height="13" rx="1.5" fill="#ececec" stroke="#b0b0b0" stroke-width="1.2"/><path d="M5 7H15M5 10H12" stroke="#c8c8c8"/></g><g transform="translate(330.5,94)"><rect x="2.5" y="3.5" width="15" height="13" rx="1.5" fill="#ececec" stroke="#b0b0b0" stroke-width="1.2"/><path d="M5 7H15M5 10H12" stroke="#c8c8c8"/></g><g transform="translate(239.5,94)"><rect x="2.5" y="5.5" width="13" height="12" rx="1" fill="#ececec" stroke="#a8a8a8" stroke-width="1.2"/><path d="M9 12L17 3L18.5 4.5L10.5 13Z" fill="#f0f0f0" stroke="#a0a0a0"/></g><g transform="translate(265.5,94)"><path d="M3 17L6 4H14L17 17Z" fill="#ececec" stroke="#a8a8a8" stroke-width="1.2"/><circle cx="10" cy="10" r="2.5" fill="#d0d0d0"/></g><g transform="translate(297,94)"><path d="M4 2L10 9L16 2" stroke="#a8a8a8" stroke-width="1.3" fill="none"/><rect x="6" y="11" width="9" height="7" fill="#e4e4e4" stroke="#b0b0b0"/></g><g transform="translate(359,94)"><rect x="1.5" y="1.5" width="17" height="10" fill="#e8e8e8" stroke="#9a9a9a" stroke-width="1.3"/><path d="M4 4.5H16M4 4.5V9M8 4.5V9M12 4.5V9M16 4.5V9" stroke="#a8a8a8" stroke-width="1.2"/><path d="M2 13H18L16 17H4Z" fill="#f0f0f0" stroke="#9a9a9a" stroke-width="1.2"/><circle cx="5" cy="16.5" r="2" fill="#f8f8f8" stroke="#a0a0a0"/><circle cx="15" cy="16.5" r="2" fill="#f8f8f8" stroke="#a0a0a0"/></g><g transform="translate(386.5,94)"><rect x="2.5" y="1.5" width="11" height="14" rx="1" fill="#ececec" stroke="#9a9a9a" stroke-width="1.2"/><path d="M6 6A2.5 2.5 0 1 1 8 8.5" fill="none" stroke="#a0a0a0" stroke-width="1.2"/><rect x="9" y="10" width="9" height="8" fill="#e8e8e8" stroke="#9a9a9a" stroke-width="1.2"/><path d="M12 11V17M15 11V17" stroke="#a8a8a8"/></g><g transform="translate(428.4,94)"><rect x="3.5" y="2.5" width="13" height="10" fill="#ececec" stroke="#a0a0a0" stroke-width="1.2"/><rect x="1.5" y="13" width="17" height="4" rx="1" fill="#e0e0e0" stroke="#a0a0a0" stroke-width="1.2"/><rect x="8" y="5" width="1.2" height="5" fill="#b8b8b8"/><rect x="10.5" y="5" width="1.2" height="5" fill="#b8b8b8"/></g><g transform="translate(456,94)"><rect x="3.5" y="2.5" width="13" height="10" fill="#ececec" stroke="#a0a0a0" stroke-width="1.2"/><rect x="1.5" y="13" width="17" height="4" rx="1" fill="#e0e0e0" stroke="#a0a0a0" stroke-width="1.2"/><path d="M8 4.5L12 7.5L8 10.5Z" fill="#a8a8a8"/></g><g transform="translate(484.6,94)"><rect x="3" y="1.5" width="10" height="10" fill="#f0b8e8" stroke="#000" stroke-width="1.3"/><rect x="6" y="3" width="1" height="5" fill="#c020c0"/><rect x="9" y="3" width="1" height="5" fill="#c020c0"/><rect x="1" y="11" width="17" height="5" fill="#ff50c0" stroke="#000" stroke-width="1.3"/><circle cx="5" cy="16" r="2.5" fill="#40d0f0" stroke="#000" stroke-width="0.8"/><circle cx="14" cy="16" r="2.5" fill="#40d0f0" stroke="#000" stroke-width="0.8"/></g><g transform="translate(510.6,94)"><rect x="1.5" y="4.5" width="11" height="12" fill="#ececec" stroke="#a0a0a0" stroke-width="1.2"/><rect x="4.5" y="1.5" width="11" height="10" fill="#e4e4e4" stroke="#a8a8a8" stroke-width="1"/><path d="M12 11H18L15 8" fill="none" stroke="#b0b0b0" stroke-width="1.5"/></g><g transform="translate(538.4,94)"><rect x="1.5" y="2.5" width="17" height="15" fill="#ececec" stroke="#a0a0a0" stroke-width="1.2"/><rect x="9" y="2.5" width="1" height="15" fill="#a0a0a0"/><rect x="3" y="10" width="3" height="6" fill="none" stroke="#a0a0a0"/><path d="M11 6H16M11 9H16M11 12H16" stroke="#b8b8b8"/></g><g transform="translate(565.7,94)"><rect x="1.5" y="2.5" width="17" height="15" fill="#ececec" stroke="#a0a0a0" stroke-width="1.2"/><rect x="4" y="7" width="12" height="6" fill="#e8e8e8" stroke="#a0a0a0"/><rect x="5" y="5" width="3" height="2" fill="#a0a0a0"/><rect x="12" y="5" width="3" height="2" fill="#a0a0a0"/><rect x="5" y="13" width="3" height="2" fill="#a0a0a0"/><rect x="12" y="13" width="3" height="2" fill="#a0a0a0"/></g><g transform="translate(593.5,94)"><rect x="5.5" y="2.5" width="9" height="15" fill="#ececec" stroke="#a0a0a0" stroke-width="1.2"/><rect x="7.5" y="9" width="5" height="6" fill="none" stroke="#a0a0a0"/><path d="M2 16L6 18M14 18L18 15" stroke="#c0c0c0"/></g><g transform="translate(621.3,94)"><rect x="2" y="2" width="16" height="16" fill="#f0f0f0" stroke="#a8a8a8" stroke-width="1"/><path d="M5 2V18M8 2V18M11 2V18M14 2V18" stroke="#a0a0a0" stroke-width="1.2"/><circle cx="8" cy="11" r="1.3" fill="#b0b0b0"/><circle cx="14" cy="13" r="1.3" fill="#b0b0b0"/></g><g transform="translate(649.4,94)"><rect x="1.5" y="3" width="17" height="15" fill="#f0f0f0" stroke="#a0a0a0" stroke-width="1.2"/><rect x="5" y="6" width="2.5" height="11" fill="none" stroke="#a0a0a0"/><rect x="12" y="6" width="2.5" height="11" fill="none" stroke="#a0a0a0"/></g><g transform="translate(676.7,94)"><rect x="1" y="1" width="9" height="9" fill="#a8a8a8"/><rect x="10" y="1" width="9" height="9" fill="#e8e8e8"/><rect x="1" y="10" width="9" height="9" fill="#c8c8c8"/><rect x="10" y="10" width="9" height="9" fill="#bdbdbd"/></g><g transform="translate(703.7,94)"><rect x="1.5" y="4.5" width="15" height="14" rx="1.5" fill="#ececec" stroke="#a0a0a0" stroke-width="1.2"/><path d="M4 10L7 13L12 6" fill="none" stroke="#b8b8b8" stroke-width="1.5"/><path d="M11 10L18 2L19.5 3.5L12.5 11Z" fill="#e0e0e0" stroke="#a0a0a0"/></g><g transform="translate(730.6,94)"><rect x="3.5" y="2.5" width="13" height="10" fill="#ececec" stroke="#a0a0a0" stroke-width="1.2"/><rect x="1.5" y="13" width="17" height="4" rx="1" fill="#e0e0e0" stroke="#a0a0a0" stroke-width="1.2"/><path d="M6 8L8 6L10 9L12 6L14 8" fill="none" stroke="#b8b8b8"/></g><g transform="translate(772.4,94)"><path d="M4 6H2.5V15H4M14 6H15.5V15H14" fill="none" stroke="#9a9a9a" stroke-width="1.5"/><path d="M13 3H18V18H13M18 9L16 11" fill="none" stroke="#c0c0c0" stroke-width="1"/></g><g transform="translate(800,94)"><path d="M4 6H2.5V15H4M14 6H15.5V15H14" fill="none" stroke="#9a9a9a" stroke-width="1.5"/><path d="M3 2H17V7M15 5L17 8L19 5" fill="none" stroke="#c0c0c0" stroke-width="1"/></g><g transform="translate(827,94)"><path d="M4 6H2.5V15H4M14 6H15.5V15H14" fill="none" stroke="#9a9a9a" stroke-width="1.5"/><path d="M6 4H9V1" fill="none" stroke="#c0c0c0" stroke-width="1"/></g><g transform="translate(855,94)"><path d="M4 6H2.5V15H4M14 6H15.5V15H14" fill="none" stroke="#9a9a9a" stroke-width="1.5"/><path d="M8 2H17V8M15 6L17 9L19 6" fill="none" stroke="#c0c0c0" stroke-width="1"/></g><g transform="translate(883.3,94)"><path d="M8 6H6.5V15H8M16 6H17.5V15H16" fill="none" stroke="#9a9a9a" stroke-width="1.5"/><path d="M1 10H5M3.5 8.5L5 10L3.5 11.5" stroke="#c0c0c0" fill="none"/></g><g transform="translate(920.8,94)"><path d="M8 6H6.5V15H8M16 6H17.5V15H16" fill="none" stroke="#9a9a9a" stroke-width="1.5"/><rect x="1" y="3" width="3" height="8" fill="none" stroke="#c8c8c8"/><path d="M1 15H5" stroke="#c8c8c8"/></g><g transform="translate(949.4,94)"><rect x="5.5" y="2.5" width="11" height="15" rx="1" fill="#f2f2f2" stroke="#a0a0a0" stroke-width="1.2"/><path d="M8 6H14M8 9H14M8 12H14" stroke="#b0b0b0"/><rect x="1" y="5" width="3" height="8" fill="none" stroke="#c8c8c8"/></g><g transform="translate(976.3,94)"><rect x="2.5" y="2.5" width="11" height="9" rx="1" fill="#f2f2f2" stroke="#a0a0a0" stroke-width="1.2"/><path d="M5 11V15H8" fill="none" stroke="#a0a0a0" stroke-width="1.2"/><path d="M15 7H17V16H15" fill="none" stroke="#9a9a9a" stroke-width="1.3"/><path d="M5 5H11M5 7.5H11" stroke="#b8b8b8"/></g><g transform="translate(1018.5,95.0)"><path d="M3 2H9M3 2V8M3 2L13 12" stroke="#111" stroke-width="1.6" fill="none"/><path d="M8 9L11 6L15.5 10.5L12.5 13.5Z" fill="none" stroke="#111" stroke-width="1"/></g><text x="1028.5" y="115.2" font-size="13" fill="#1a1a2a" text-anchor="middle">Esc</text><g transform="translate(1045,93.5)"><rect x="5" y="1.5" width="8" height="4" fill="none" stroke="#a0a0a0" stroke-width="1.2"/><path d="M9 5.5V10M5 8H13" stroke="#a0a0a0" stroke-width="1.2"/></g><text x="1055" y="115.2" font-size="13" fill="#9a9fa8" text-anchor="middle">F3</text><g transform="translate(1074,93.5)"><rect x="3" y="1.5" width="14" height="7" fill="none" stroke="#a0a0a0" stroke-width="1.2"/><path d="M10 1.5V8.5M0 5H3" stroke="#a0a0a0" stroke-width="1.2"/><text x="6.5" y="7.5" font-size="6" fill="#a0a0a0" text-anchor="middle">N</text></g><text x="1084" y="115.2" font-size="13" fill="#9a9fa8" text-anchor="middle">F4</text><g transform="translate(1100.6,93.5)"><rect x="5" y="1.5" width="8" height="4" fill="none" stroke="#a0a0a0" stroke-width="1.2"/><path d="M7 5.5V10M11 5.5V10M5 8H13" stroke="#a0a0a0" stroke-width="1.2"/></g><text x="1110.6" y="115.2" font-size="13" fill="#9a9fa8" text-anchor="middle">F5</text><g transform="translate(1128.2,93.5)"><path d="M3 10V5H15" stroke="#a0a0a0" stroke-width="1.2" fill="none"/><path d="M12 2L16 5L12 8Z" fill="#a0a0a0"/></g><text x="1138.2" y="115.2" font-size="13" fill="#9a9fa8" text-anchor="middle">F6</text><g transform="translate(1155.6,93.5)"><path d="M4 1V6H15" stroke="#a0a0a0" stroke-width="1.2" fill="none"/><path d="M13 3.5L17 6L13 8.5Z" fill="#a0a0a0"/></g><text x="1165.6" y="115.2" font-size="13" fill="#9a9fa8" text-anchor="middle">F7</text><g transform="translate(1183.3,93.5)"><rect x="0.5" y="2.5" width="8" height="4" fill="none" stroke="#c8c8c8" stroke-width="1"/><rect x="11" y="2.5" width="8" height="4" fill="none" stroke="#c8c8c8" stroke-width="1"/><rect x="7" y="1" width="6" height="4" fill="none" stroke="#a0a0a0" stroke-width="1.2"/><path d="M10 5V9" stroke="#a0a0a0"/></g><text x="1193.3" y="115.2" font-size="13" fill="#9a9fa8" text-anchor="middle">F8</text><g transform="translate(1210.4,93.5)"><rect x="0.5" y="1" width="6" height="4" fill="none" stroke="#a0a0a0" stroke-width="1.2"/><rect x="6" y="2.5" width="13" height="4" fill="none" stroke="#c8c8c8" stroke-width="1"/><path d="M3.5 5V9" stroke="#a0a0a0"/></g><text x="1220.4" y="115.2" font-size="13" fill="#9a9fa8" text-anchor="middle">F9</text><g transform="translate(16.3,125.0)"><path d="M3 2H9M3 2V8M3 2L13 12" stroke="#111" stroke-width="1.6" fill="none"/><path d="M8 9L11 6L15.5 10.5L12.5 13.5Z" fill="none" stroke="#111" stroke-width="1"/></g><text x="26.3" y="146.6" font-size="13" fill="#1a1a2a" text-anchor="middle">Esc</text><g transform="translate(43.8,123.5)"><g transform="translate(0,6)"><path d="M1 2H5.5M5.5 -2.5V7M14.5 -2.5V7M14.5 2H19" stroke="#111" stroke-width="1.6" fill="none"/></g></g><text x="53.8" y="146.6" font-size="13" fill="#1a1a2a" text-anchor="middle">F3</text><g transform="translate(71.3,123.5)"><g transform="translate(0,6)"><path d="M1 2H5.5M5.5 -2.5V7M14.5 -2.5V7M14.5 2H19" stroke="#111" stroke-width="1.6" fill="none"/><path d="M7.5 7L12.5 -2" stroke="#111" stroke-width="1.2"/></g></g><text x="81.3" y="146.6" font-size="13" fill="#1a1a2a" text-anchor="middle">F4</text><g transform="translate(98.8,123.5)"><g transform="translate(0,6)"><path d="M1 2H5.5M5.5 -2.5V7M14.5 -2.5V7M14.5 2H19" stroke="#111" stroke-width="1.6" fill="none"/><text x="10" y="6.5" font-size="10" fill="#111" text-anchor="middle" font-weight="bold">P</text></g></g><text x="108.8" y="146.6" font-size="13" fill="#1a1a2a" text-anchor="middle">sF1</text><g transform="translate(126.30000000000001,123.5)"><g transform="translate(0,6)"><path d="M1 2H5.5M5.5 -2.5V7M14.5 -2.5V7M14.5 2H19" stroke="#111" stroke-width="1.6" fill="none"/><text x="10" y="6.5" font-size="10" fill="#111" text-anchor="middle" font-weight="bold">N</text></g></g><text x="136.3" y="146.6" font-size="13" fill="#1a1a2a" text-anchor="middle">sF2</text><g transform="translate(153.8,123.5)"><path d="M1 11H7V3H13V11H19" stroke="#a0a0a0" stroke-width="1" fill="none"/><path d="M7 4V9M5 6L7 3.5L9 6" stroke="#a0a0a0" stroke-width="1" fill="none"/></g><text x="163.8" y="146.6" font-size="13" fill="#9a9fa8" text-anchor="middle">aR</text><g transform="translate(181.3,123.5)"><path d="M1 11H7V3H13V11H19" stroke="#a0a0a0" stroke-width="1" fill="none"/><path d="M15 4V10M13 7.5L15 10L17 7.5" stroke="#a0a0a0" stroke-width="1" fill="none"/></g><text x="191.3" y="146.6" font-size="13" fill="#9a9fa8" text-anchor="middle">aF</text><g transform="translate(208.8,123.5)"><path d="M2 8H18" stroke="#111" stroke-width="1.6"/></g><text x="218.8" y="146.6" font-size="13" fill="#1a1a2a" text-anchor="middle">F5</text><g transform="translate(236.3,123.5)"><path d="M10 2V10" stroke="#111" stroke-width="1.6"/></g><text x="246.3" y="146.6" font-size="13" fill="#1a1a2a" text-anchor="middle">F6</text><g transform="translate(263.8,123.5)"><path d="M1 8H18M13 3L18 8L13 13M16 3L20 8L16 13" stroke="#111" stroke-width="1.4" fill="none"/></g><text x="273.8" y="146.6" font-size="13" fill="#1a1a2a" text-anchor="middle">sF8</text><g transform="translate(291.3,123.5)"><path d="M2 8H18M5 3L15 13M15 3L5 13M10 3V13" stroke="#111" stroke-width="1.2" fill="none"/></g><text x="301.3" y="146.6" font-size="13" fill="#1a1a2a" text-anchor="middle">sF9</text><g transform="translate(318.8,123.5)"><g transform="translate(0,6)"><path d="M0.5 2H4M16 2H19.5M7 -3Q3.5 2 7 7M13 -3Q16.5 2 13 7" stroke="#111" stroke-width="1.5" fill="none"/></g></g><text x="328.8" y="146.6" font-size="13" fill="#1a1a2a" text-anchor="middle">F9</text><g transform="translate(346.3,123.5)"><g transform="translate(0,6)"><path d="M0.5 2H4M16 2H19.5M7 -3Q3.5 2 7 7M13 -3Q16.5 2 13 7" stroke="#111" stroke-width="1.5" fill="none"/><path d="M8 6L12 -2" stroke="#111" stroke-width="1.2"/></g></g><text x="356.3" y="146.6" font-size="13" fill="#1a1a2a" text-anchor="middle">F11</text><g transform="translate(373.8,123.5)"><g transform="translate(0,6)"><path d="M0.5 2H4M16 2H19.5M7 -3Q3.5 2 7 7M13 -3Q16.5 2 13 7" stroke="#111" stroke-width="1.5" fill="none"/><text x="10" y="6.5" font-size="10.5" fill="#111" text-anchor="middle">S</text></g></g><text x="383.8" y="146.6" font-size="13" fill="#1a1a2a" text-anchor="middle">sF3</text><g transform="translate(401.3,123.5)"><g transform="translate(0,6)"><path d="M0.5 2H4M16 2H19.5M7 -3Q3.5 2 7 7M13 -3Q16.5 2 13 7" stroke="#111" stroke-width="1.5" fill="none"/><text x="10" y="6.5" font-size="10.5" fill="#111" text-anchor="middle">R</text></g></g><text x="411.3" y="146.6" font-size="13" fill="#1a1a2a" text-anchor="middle">sF4</text><g transform="translate(428.8,123.5)"><g transform="translate(0,6)"><path d="M0.5 2H4M16 2H19.5M7 -3Q3.5 2 7 7M13 -3Q16.5 2 13 7" stroke="#111" stroke-width="1.5" fill="none"/><text x="10" y="6.5" font-size="10.5" fill="#111" text-anchor="middle">P</text></g></g><text x="438.8" y="146.6" font-size="13" fill="#1a1a2a" text-anchor="middle">sF5</text><g transform="translate(456.3,123.5)"><g transform="translate(0,6)"><path d="M0.5 2H4M16 2H19.5M7 -3Q3.5 2 7 7M13 -3Q16.5 2 13 7" stroke="#111" stroke-width="1.5" fill="none"/><text x="10" y="6.5" font-size="10.5" fill="#111" text-anchor="middle">N</text></g></g><text x="466.3" y="146.6" font-size="13" fill="#1a1a2a" text-anchor="middle">sF6</text><g transform="translate(483.8,123.5)"><g transform="translate(0,6)"><path d="M0.5 2H4M16 2H19.5M6.5 -3H5V1.5H4.5V2.5H5V7H6.5M13.5 -3H15V1.5H15.5V2.5H15V7H13.5" stroke="#111" stroke-width="1.4" fill="none"/><text x="10" y="6.5" font-size="10.5" fill="#111" text-anchor="middle" font-weight="bold">F</text></g></g><text x="493.8" y="146.6" font-size="13" fill="#1a1a2a" text-anchor="middle">F10</text><g transform="translate(511.29999999999995,123.5)"><rect x="4" y="4" width="12" height="7" fill="none" stroke="#a0a0a0" stroke-width="1.3"/><path d="M0 7.5H4M16 7.5H20" stroke="#a0a0a0" stroke-width="1.3"/></g><text x="521.3" y="146.6" font-size="13" fill="#9a9fa8" text-anchor="middle">sF7</text><g transform="translate(538.8,123.5)"><path d="M5 3.5V13.5M3 3.5V9H5M15 3.5V13.5M17 3.5V9H15" stroke="#111" stroke-width="1.6" fill="none"/></g><text x="548.8" y="146.6" font-size="13" fill="#1a1a2a" text-anchor="middle">c3</text><g transform="translate(566.3,123.5)"><path d="M5 3.5V13.5M3 3.5V9H5M15 3.5V13.5M17 3.5V9H15" stroke="#111" stroke-width="1.6" fill="none"/><path d="M7 13L13 7" stroke="#111" stroke-width="1.3"/></g><text x="576.3" y="146.6" font-size="13" fill="#1a1a2a" text-anchor="middle">c4</text><g transform="translate(593.8,123.5)"><path d="M5 3.5V13.5M3 3.5V9H5M15 3.5V13.5M17 3.5V9H15" stroke="#111" stroke-width="1.6" fill="none"/><text x="10" y="12.5" font-size="10" fill="#111" text-anchor="middle" font-weight="bold">P</text></g><text x="603.8" y="146.6" font-size="13" fill="#1a1a2a" text-anchor="middle">c5</text><g transform="translate(621.3,123.5)"><path d="M5 3.5V13.5M3 3.5V9H5M15 3.5V13.5M17 3.5V9H15" stroke="#111" stroke-width="1.6" fill="none"/><text x="10" y="12.5" font-size="10" fill="#111" text-anchor="middle" font-weight="bold">N</text></g><text x="631.3" y="146.6" font-size="13" fill="#1a1a2a" text-anchor="middle">c6</text><g transform="translate(663.8,125)"><path d="M1.5 5H7L8 3H11L12 5H18.5V18H1.5Z" fill="#f4e0f4" stroke="#111" stroke-width="1.3"/><rect x="7" y="2" width="5" height="2" fill="#8030a0"/><path d="M4 8.5H16M4 11H16M4 13.5H16M4 16H16" stroke="#333" stroke-width="1.1"/></g><g transform="translate(691.3,125)"><path d="M1.5 5H6L7 3H11L12 5H18.5V18H1.5Z" fill="#ececec" stroke="#9a9a9a" stroke-width="1.2"/><path d="M4 10H16M4 14H16" stroke="#b8b8b8" stroke-width="1.5" stroke-dasharray="2 1"/></g><g transform="translate(718.8,125)"><rect x="1.5" y="2.5" width="17" height="15" fill="#556" /><rect x="3" y="4.5" width="14" height="12" fill="#c4dcf4"/><path d="M4 10H9L10 8H14V15H4Z" fill="#f0d048" stroke="#000" stroke-width="1"/><path d="M13 6L16 9M16 6L13 9" stroke="#f08020" stroke-width="1.5"/></g><g transform="translate(746.3,125)"><rect x="1.5" y="2.5" width="17" height="15" fill="#556" /><rect x="3" y="4.5" width="14" height="12" fill="#c4dcf4"/><rect x="4.5" y="8" width="11" height="7" fill="#c8ecc8" stroke="#000" stroke-width="1"/><path d="M4.5 8L10 12.5L15.5 8" fill="none" stroke="#000" stroke-width="1"/></g><g transform="translate(773.8,125)"><rect x="1.5" y="2.5" width="17" height="15" fill="#556" /><rect x="3" y="4.5" width="14" height="12" fill="#c4dcf4"/><circle cx="7" cy="12" r="2.8" fill="#f8c8b0" stroke="#000"/><circle cx="13" cy="12" r="2.8" fill="#f8c8b0" stroke="#000"/><path d="M4 10L6 6M16 10L14 6" stroke="#000"/></g><g transform="translate(801.3,125)"><rect x="1.5" y="2.5" width="17" height="15" fill="#556" /><rect x="3" y="4.5" width="14" height="12" fill="#c4dcf4"/><text x="10" y="15.5" font-size="12" font-weight="bold" fill="#a05010" text-anchor="middle" font-family="Liberation Serif">F</text></g><g transform="translate(838,125)"><rect x="1.5" y="2.5" width="17" height="15" rx="1" fill="#556"/><rect x="3" y="4" width="14" height="12" fill="#b8e4f4"/><rect x="5" y="6" width="10" height="2.5" fill="#d8b040"/><path d="M10 8.5V11" stroke="#333"/><rect x="4" y="11" width="5" height="4" fill="#e060a0" stroke="#333" stroke-width="0.6"/><rect x="11" y="11" width="5" height="4" fill="#40a0e0" stroke="#333" stroke-width="0.6"/></g><g transform="translate(865.5,125)"><rect x="1.5" y="2.5" width="17" height="15" rx="1" fill="#223"/><rect x="3" y="4" width="14" height="12" fill="#b8e4f8"/><path d="M5 7V14M10 7V14M15 7V14" stroke="#5020c0" stroke-width="1.6"/><path d="M3.5 9L5 7L6.5 9M8.5 12L10 14L11.5 12M13.5 9L15 7L16.5 9" stroke="#5020c0" fill="none"/><path d="M3 5H17" stroke="#40c040" stroke-dasharray="1 1"/></g><g transform="translate(893,125)"><rect x="1.5" y="9.5" width="17" height="8" fill="#b8f0e8" stroke="#111" stroke-width="1.2"/><path d="M3 14H17" stroke="#333" stroke-dasharray="1 1"/><path d="M6 2V8M4 6L6 8.5L8 6M13 2V8M11 6L13 8.5L15 6" stroke="#20a040" stroke-width="1.6" fill="none"/></g><g transform="translate(930.6,125)"><path d="M1.5 2.5H14L18.5 6.5V17.5H1.5Z" fill="#cce8cc" stroke="#111" stroke-width="1.3"/><path d="M14 2.5V6.5H18.5" fill="#fff" stroke="#111" stroke-width="1"/><path d="M4 7L9.5 14L15 7" stroke="#f07818" stroke-width="2.6" fill="none"/></g><g transform="translate(958,125)"><path d="M1.5 2.5H14L18.5 6.5V17.5H1.5Z" fill="#cce8cc" stroke="#111" stroke-width="1.3"/><path d="M14 2.5V6.5H18.5" fill="#fff" stroke="#111" stroke-width="1"/><text x="9" y="15" font-size="12" font-weight="bold" fill="#1878e0" text-anchor="middle" font-family="Liberation Serif">D</text></g><g transform="translate(985.6,125)"><path d="M1.5 2.5H14L18.5 6.5V17.5H1.5Z" fill="#cce8cc" stroke="#111" stroke-width="1.3"/><path d="M14 2.5V6.5H18.5" fill="#fff" stroke="#111" stroke-width="1"/><text x="7" y="15" font-size="12" fill="#1878e0" text-anchor="middle" font-family="Liberation Serif">D</text><text x="13.5" y="15" font-size="9" fill="#f08018" text-anchor="middle">y</text></g><g transform="translate(1013,125)"><path d="M1.5 2.5H14L18.5 6.5V17.5H1.5Z" fill="#cce8cc" stroke="#111" stroke-width="1.3"/><path d="M14 2.5V6.5H18.5" fill="#fff" stroke="#111" stroke-width="1"/><text x="7" y="15" font-size="12" fill="#1878e0" text-anchor="middle" font-family="Liberation Serif">D</text><text x="13.5" y="16" font-size="10" fill="#f040c0" text-anchor="middle">c</text></g><g transform="translate(1040.6,125)"><path d="M1.5 2.5H14L18.5 6.5V17.5H1.5Z" fill="#cce8cc" stroke="#111" stroke-width="1.3"/><path d="M14 2.5V6.5H18.5" fill="#fff" stroke="#111" stroke-width="1"/><text x="7" y="15" font-size="11" fill="#f08018" text-anchor="middle">V</text><text x="13.5" y="16" font-size="10" fill="#f040c0" text-anchor="middle">c</text></g><g transform="translate(1068,125)"><path d="M1.5 2.5H14L18.5 6.5V17.5H1.5Z" fill="#cce8cc" stroke="#111" stroke-width="1.3"/><path d="M14 2.5V6.5H18.5" fill="#fff" stroke="#111" stroke-width="1"/><text x="9.5" y="15.5" font-size="13" fill="#000" text-anchor="middle" font-family="Liberation Serif" font-weight="bold">A</text></g><g transform="translate(1104.5,125)"><circle cx="9" cy="9" r="6.3" fill="#b8d8f8" stroke="#101040" stroke-width="1.4"/><path d="M13.5 13.5L18 18" stroke="#000" stroke-width="2.4"/><path d="M5.5 9H12.5M9 5.5V12.5" stroke="#3030c0" stroke-width="2"/></g><g transform="translate(1132,125)"><circle cx="9" cy="9" r="6.3" fill="#c8f0a8" stroke="#104010" stroke-width="1.4"/><path d="M13.5 13.5L18 18" stroke="#000" stroke-width="2.4"/><path d="M5.5 9H12.5" stroke="#208020" stroke-width="2"/></g><g transform="translate(1170,125)"><circle cx="6" cy="5.5" r="4" fill="#8060f0" stroke="#000" stroke-width="1.2"/><path d="M4 9L1 13" stroke="#000" stroke-width="1.5"/><path d="M8 13H19M12 9V17M15 9V17" stroke="#f07840" stroke-width="1.8"/></g><g transform="translate(1197,125)"><circle cx="6" cy="5.5" r="4" fill="#e8e8e8" stroke="#a8a8a8" stroke-width="1.2"/><path d="M4 9L1 13" stroke="#a8a8a8" stroke-width="1.5"/><path d="M8 13H19M12 9V17M15 9V17" stroke="#d0d0d0" stroke-width="1.8"/></g><g transform="translate(1236,125)"><rect x="1" y="2" width="18" height="16" rx="1" fill="#333"/><rect x="3" y="4" width="14" height="12" fill="#40c8d8"/><path d="M5 6.5H15M5 9H11M5 11.5H15M5 14H11" stroke="#103040" stroke-width="1.2"/></g><g transform="translate(1278,125)"><rect x="4.5" y="8.5" width="14" height="10" fill="#c8ece8" stroke="#111" stroke-width="1.2"/><path d="M2 1.5H15Q17 1.5 17 3.5V9Q17 11 15 11H7L4 14V11H2Q0.5 11 0.5 9V3.5Q0.5 1.5 2 1.5Z" fill="#fff" stroke="#e83060" stroke-width="1.4"/><path d="M3 4.5H14M3 7.5H12" stroke="#888" stroke-width="1"/></g><g transform="translate(1314.5,125)"><circle cx="10" cy="10" r="7.5" fill="#5080e0" stroke="#203080" stroke-width="1.2"/><circle cx="10" cy="10" r="5.5" fill="#e8f0ff"/><path d="M6 10L9 13L14 6.5" stroke="#e02040" stroke-width="2.2" fill="none"/></g><g transform="translate(1342.7,125)"><circle cx="10" cy="10" r="7.5" fill="#e06070" stroke="#802030" stroke-width="1.2"/><circle cx="10" cy="10" r="5.5" fill="#f8c8d8"/><path d="M7 7L13 13M13 7L7 13" stroke="#2060e0" stroke-width="2.2"/></g><g transform="translate(1370.7,125)"><path d="M1.5 9V18.5H18.5V9" fill="#c088e0" stroke="#111" stroke-width="1.3"/><path d="M3 8L9.5 10V17L3 15Z" fill="#b8e8f8" stroke="#111" stroke-width="1.2"/><path d="M17 8L10.5 10V17L17 15Z" fill="#b8e8f8" stroke="#111" stroke-width="1.2"/><path d="M2 1L5 4M3 4H5V2M18 1L15 4M17 4H15V2" stroke="#e82040" stroke-width="1.2" fill="none"/></g><g transform="translate(1398,125)"><path d="M1.5 9V18.5H18.5V9" fill="#e8e8e8" stroke="#a0a0a0" stroke-width="1.3"/><path d="M3 8L9.5 10V17L3 15Z" fill="#f0f0f0" stroke="#a0a0a0" stroke-width="1.2"/><path d="M17 8L10.5 10V17L17 15Z" fill="#f0f0f0" stroke="#a0a0a0" stroke-width="1.2"/><path d="M7 1L13 6M13 1L7 6" stroke="#b8b8b8" stroke-width="1.2"/></g><g transform="translate(1425.5,125)"><path d="M1.5 9V18.5H18.5V9" fill="#e8e8e8" stroke="#a0a0a0" stroke-width="1.3"/><path d="M3 8L9.5 10V17L3 15Z" fill="#f0f0f0" stroke="#a0a0a0" stroke-width="1.2"/><path d="M17 8L10.5 10V17L17 15Z" fill="#f0f0f0" stroke="#a0a0a0" stroke-width="1.2"/><path d="M7 5Q8 1 13 2" stroke="#b8b8b8" stroke-width="1.2" fill="none"/></g><g transform="translate(1453.4,125)"><path d="M1.5 9V18.5H18.5V9" fill="#e8e8e8" stroke="#a0a0a0" stroke-width="1.3"/><path d="M3 8L9.5 10V17L3 15Z" fill="#f0f0f0" stroke="#a0a0a0" stroke-width="1.2"/><path d="M17 8L10.5 10V17L17 15Z" fill="#f0f0f0" stroke="#a0a0a0" stroke-width="1.2"/><path d="M7 5Q10 0 14 3" stroke="#b8b8b8" stroke-width="1.2" fill="none"/></g></svg><svg class="a" style="left:301px;top:177px" width="1580" height="787" viewBox="301 177 1580 787" font-family="Liberation Sans, sans-serif"><rect x="301" y="177" width="1580" height="787" fill="#fff"/><rect x="1880" y="177" width="1" height="787" fill="#d4d8e0"/><rect x="310" y="183" width="102" height="773" fill="#f0f0f0"/><line x1="415" y1="184.5" x2="1675" y2="184.5" stroke="#e6e6fa" stroke-width="1" stroke-dasharray="4 3.5"/><line x1="415" y1="253.5" x2="1675" y2="253.5" stroke="#e6e6fa" stroke-width="1" stroke-dasharray="4 3.5"/><line x1="415" y1="369.5" x2="1675" y2="369.5" stroke="#e6e6fa" stroke-width="1" stroke-dasharray="4 3.5"/><line x1="415" y1="486.5" x2="1675" y2="486.5" stroke="#e6e6fa" stroke-width="1" stroke-dasharray="4 3.5"/><line x1="415" y1="555.5" x2="1675" y2="555.5" stroke="#e6e6fa" stroke-width="1" stroke-dasharray="4 3.5"/><line x1="415" y1="672.5" x2="1675" y2="672.5" stroke="#e6e6fa" stroke-width="1" stroke-dasharray="4 3.5"/><line x1="415" y1="740.5" x2="1675" y2="740.5" stroke="#e6e6fa" stroke-width="1" stroke-dasharray="4 3.5"/><line x1="415" y1="857.5" x2="1675" y2="857.5" stroke="#e6e6fa" stroke-width="1" stroke-dasharray="4 3.5"/><line x1="541.5" y1="183" x2="541.5" y2="934" stroke="#e6e6fa" stroke-width="1" stroke-dasharray="4 3.5"/><line x1="667.5" y1="183" x2="667.5" y2="934" stroke="#e6e6fa" stroke-width="1" stroke-dasharray="4 3.5"/><line x1="793.5" y1="183" x2="793.5" y2="934" stroke="#e6e6fa" stroke-width="1" stroke-dasharray="4 3.5"/><line x1="919.5" y1="183" x2="919.5" y2="934" stroke="#e6e6fa" stroke-width="1" stroke-dasharray="4 3.5"/><line x1="1045.5" y1="183" x2="1045.5" y2="934" stroke="#e6e6fa" stroke-width="1" stroke-dasharray="4 3.5"/><line x1="1171.5" y1="183" x2="1171.5" y2="934" stroke="#e6e6fa" stroke-width="1" stroke-dasharray="4 3.5"/><line x1="1297.5" y1="183" x2="1297.5" y2="934" stroke="#e6e6fa" stroke-width="1" stroke-dasharray="4 3.5"/><line x1="1423.5" y1="183" x2="1423.5" y2="934" stroke="#e6e6fa" stroke-width="1" stroke-dasharray="4 3.5"/><line x1="1549.5" y1="183" x2="1549.5" y2="934" stroke="#e6e6fa" stroke-width="1" stroke-dasharray="4 3.5"/><rect x="310" y="251" width="102" height="2" fill="#a0a0a0"/><rect x="310" y="368" width="102" height="2" fill="#a0a0a0"/><rect x="310" y="485" width="102" height="2" fill="#a0a0a0"/><rect x="310" y="554" width="102" height="2" fill="#a0a0a0"/><rect x="310" y="671" width="102" height="2" fill="#a0a0a0"/><rect x="310" y="739" width="102" height="2" fill="#a0a0a0"/><rect x="310" y="856" width="102" height="2" fill="#a0a0a0"/><rect x="308" y="181" width="1564" height="2" fill="#8c8c8c"/><rect x="308" y="181" width="2" height="775" fill="#8c8c8c"/><rect x="412" y="183" width="1" height="751" fill="#a0a0a0"/><rect x="413" y="183" width="2" height="751" fill="#000"/><rect x="1675" y="183" width="3" height="751" fill="#000"/><text transform="translate(326.00,223.90) scale(0.9600,1)" font-size="17.3" fill="#229a22" stroke="#229a22" stroke-width="0.2">Comment</text><text transform="translate(415.30,223.90) scale(0.9830,1)" font-size="17.5" fill="#229a22" stroke="#229a22" stroke-width="0.2">START SYSTEM</text><text transform="translate(326.00,525.90) scale(0.9600,1)" font-size="17.3" fill="#229a22" stroke="#229a22" stroke-width="0.2">Comment</text><text transform="translate(415.30,525.90) scale(0.9371,1)" font-size="17.5" fill="#229a22" stroke="#229a22" stroke-width="0.2">CONVEYOR ON</text><text transform="translate(326.00,712.50) scale(0.9600,1)" font-size="17.3" fill="#229a22" stroke="#229a22" stroke-width="0.2">Comment</text><text transform="translate(415.30,712.50) scale(0.9489,1)" font-size="17.5" fill="#229a22" stroke="#229a22" stroke-width="0.2">WEIGHING AREA</text><text x="404" y="365" fill="#3a30ff" stroke="#3a30ff" stroke-width="0.22" font-size="17" text-anchor="end" >1</text><text x="404" y="669" fill="#3a30ff" stroke="#3a30ff" stroke-width="0.22" font-size="17" text-anchor="end" >6</text><text x="404" y="853.5" fill="#3a30ff" stroke="#3a30ff" stroke-width="0.22" font-size="17" text-anchor="end" >11</text><line x1="415" y1="299.3" x2="465.5" y2="299.3" stroke="#1a1a1a" stroke-width="1.6"/><line x1="490.5" y1="299.3" x2="591.5" y2="299.3" stroke="#1a1a1a" stroke-width="1.6"/><line x1="616.5" y1="299.3" x2="1596.5" y2="299.3" stroke="#1a1a1a" stroke-width="1.6"/><line x1="1627.5" y1="299.3" x2="1675" y2="299.3" stroke="#1a1a1a" stroke-width="1.6"/><line x1="465.5" y1="288.8" x2="465.5" y2="311.0" stroke="#1a1a1a" stroke-width="1.5"/><line x1="490.5" y1="288.8" x2="490.5" y2="311.0" stroke="#1a1a1a" stroke-width="1.5"/><text x="477.2" y="281.3" fill="#111" stroke="#111" stroke-width="0.22" font-size="17" text-anchor="middle" letter-spacing="-0.6">P0000</text><text x="477.3" y="328.6" fill="#3a30ff" stroke="#3a30ff" stroke-width="0.22" font-size="17" text-anchor="middle" >START</text><line x1="591.5" y1="288.8" x2="591.5" y2="311.0" stroke="#1a1a1a" stroke-width="1.5"/><line x1="616.5" y1="288.8" x2="616.5" y2="311.0" stroke="#1a1a1a" stroke-width="1.5"/><line x1="597.5" y1="309.8" x2="610" y2="290.6" stroke="#1a1a1a" stroke-width="1.5"/><text x="603.2" y="281.3" fill="#111" stroke="#111" stroke-width="0.22" font-size="17" text-anchor="middle" letter-spacing="-0.6">P0001</text><text x="603.3" y="328.6" fill="#3a30ff" stroke="#3a30ff" stroke-width="0.22" font-size="17" text-anchor="middle" >STOP</text><path d="M1603.8 291.0 C1599.5 294.3 1596.8 297.3 1596.5 299.3 C1596.8 301.3 1599.5 304.3 1603.8 307.6 M1620.2 291.0 C1624.5 294.3 1627.2 297.3 1627.5 299.3 C1627.2 301.3 1624.5 304.3 1620.2 307.6" fill="none" stroke="#1a1a1a" stroke-width="1.4"/><text x="1611.2" y="281.3" fill="#111" stroke="#111" stroke-width="0.22" font-size="17" text-anchor="middle" letter-spacing="-0.6">M0000</text><text x="1611.3" y="328.6" fill="#3a30ff" stroke="#3a30ff" stroke-width="0.22" font-size="17" text-anchor="middle" >SYSTEM_O</text><text x="1611.3" y="348.20000000000005" fill="#3a30ff" stroke="#3a30ff" stroke-width="0.22" font-size="17" text-anchor="middle" >N</text><line x1="542" y1="298.40000000000003" x2="542" y2="417.9" stroke="#333" stroke-width="2"/><line x1="415" y1="417" x2="465.5" y2="417" stroke="#1a1a1a" stroke-width="1.6"/><line x1="490.5" y1="417" x2="542" y2="417" stroke="#1a1a1a" stroke-width="1.6"/><line x1="465.5" y1="406.5" x2="465.5" y2="428.7" stroke="#1a1a1a" stroke-width="1.5"/><line x1="490.5" y1="406.5" x2="490.5" y2="428.7" stroke="#1a1a1a" stroke-width="1.5"/><text x="477.2" y="399" fill="#111" stroke="#111" stroke-width="0.22" font-size="17" text-anchor="middle" letter-spacing="-0.6">M0000</text><text x="477.3" y="446.3" fill="#3a30ff" stroke="#3a30ff" stroke-width="0.22" font-size="17" text-anchor="middle" >SYSTEM_O</text><text x="477.3" y="465.90000000000003" fill="#3a30ff" stroke="#3a30ff" stroke-width="0.22" font-size="17" text-anchor="middle" >N</text><line x1="415" y1="603" x2="465.5" y2="603" stroke="#1a1a1a" stroke-width="1.6"/><line x1="490.5" y1="603" x2="591.5" y2="603" stroke="#1a1a1a" stroke-width="1.6"/><line x1="616.5" y1="603" x2="717.5" y2="603" stroke="#1a1a1a" stroke-width="1.6"/><line x1="742.5" y1="603" x2="1596.5" y2="603" stroke="#1a1a1a" stroke-width="1.6"/><line x1="1627.5" y1="603" x2="1675" y2="603" stroke="#1a1a1a" stroke-width="1.6"/><line x1="465.5" y1="591.4" x2="465.5" y2="613.6" stroke="#1a1a1a" stroke-width="1.5"/><line x1="490.5" y1="591.4" x2="490.5" y2="613.6" stroke="#1a1a1a" stroke-width="1.5"/><text x="477.2" y="583.9" fill="#111" stroke="#111" stroke-width="0.22" font-size="17" text-anchor="middle" letter-spacing="-0.6">M0000</text><text x="477.3" y="631.1999999999999" fill="#3a30ff" stroke="#3a30ff" stroke-width="0.22" font-size="17" text-anchor="middle" >SYSTEM_O</text><text x="477.3" y="650.8" fill="#3a30ff" stroke="#3a30ff" stroke-width="0.22" font-size="17" text-anchor="middle" >N</text><line x1="591.5" y1="591.4" x2="591.5" y2="613.6" stroke="#1a1a1a" stroke-width="1.5"/><line x1="616.5" y1="591.4" x2="616.5" y2="613.6" stroke="#1a1a1a" stroke-width="1.5"/><line x1="597.5" y1="612.4" x2="610" y2="593.1999999999999" stroke="#1a1a1a" stroke-width="1.5"/><text x="603.2" y="583.9" fill="#111" stroke="#111" stroke-width="0.22" font-size="17" text-anchor="middle" letter-spacing="-0.6">P0043</text><text x="603.3" y="631.1999999999999" fill="#3a30ff" stroke="#3a30ff" stroke-width="0.22" font-size="17" text-anchor="middle" >ALARM_M</text><text x="603.3" y="650.8" fill="#3a30ff" stroke="#3a30ff" stroke-width="0.22" font-size="17" text-anchor="middle" >AX</text><line x1="717.5" y1="591.4" x2="717.5" y2="613.6" stroke="#1a1a1a" stroke-width="1.5"/><line x1="742.5" y1="591.4" x2="742.5" y2="613.6" stroke="#1a1a1a" stroke-width="1.5"/><line x1="723.5" y1="612.4" x2="736" y2="593.1999999999999" stroke="#1a1a1a" stroke-width="1.5"/><text x="729.2" y="583.9" fill="#111" stroke="#111" stroke-width="0.22" font-size="17" text-anchor="middle" letter-spacing="-0.6">M0001</text><text x="729.3" y="631.1999999999999" fill="#3a30ff" stroke="#3a30ff" stroke-width="0.22" font-size="17" text-anchor="middle" >PAUSE_SY</text><text x="729.3" y="650.8" fill="#3a30ff" stroke="#3a30ff" stroke-width="0.22" font-size="17" text-anchor="middle" >STEM</text><path d="M1603.8 594.7 C1599.5 598 1596.8 601 1596.5 603 C1596.8 605 1599.5 608 1603.8 611.3 M1620.2 594.7 C1624.5 598 1627.2 601 1627.5 603 C1627.2 605 1624.5 608 1620.2 611.3" fill="none" stroke="#1a1a1a" stroke-width="1.4"/><text x="1611.2" y="583.9" fill="#111" stroke="#111" stroke-width="0.22" font-size="17" text-anchor="middle" letter-spacing="-0.6">P0040</text><text x="1611.3" y="631.1999999999999" fill="#3a30ff" stroke="#3a30ff" stroke-width="0.22" font-size="17" text-anchor="middle" >CONVEYO</text><text x="1611.3" y="650.8" fill="#3a30ff" stroke="#3a30ff" stroke-width="0.22" font-size="17" text-anchor="middle" >R</text><line x1="415" y1="788" x2="465.5" y2="788" stroke="#1a1a1a" stroke-width="1.6"/><line x1="490.5" y1="788" x2="591.5" y2="788" stroke="#1a1a1a" stroke-width="1.6"/><line x1="616.5" y1="788" x2="1596.5" y2="788" stroke="#1a1a1a" stroke-width="1.6"/><line x1="1627.5" y1="788" x2="1675" y2="788" stroke="#1a1a1a" stroke-width="1.6"/><line x1="465.5" y1="777.5" x2="465.5" y2="799.7" stroke="#1a1a1a" stroke-width="1.5"/><line x1="490.5" y1="777.5" x2="490.5" y2="799.7" stroke="#1a1a1a" stroke-width="1.5"/><text x="477.2" y="770" fill="#111" stroke="#111" stroke-width="0.22" font-size="17" text-anchor="middle" letter-spacing="-0.6">M0000</text><text x="477.3" y="817.3" fill="#3a30ff" stroke="#3a30ff" stroke-width="0.22" font-size="17" text-anchor="middle" >SYSTEM_O</text><text x="477.3" y="836.9" fill="#3a30ff" stroke="#3a30ff" stroke-width="0.22" font-size="17" text-anchor="middle" >N</text><line x1="591.5" y1="777.5" x2="591.5" y2="799.7" stroke="#1a1a1a" stroke-width="1.5"/><line x1="616.5" y1="777.5" x2="616.5" y2="799.7" stroke="#1a1a1a" stroke-width="1.5"/><text x="604" y="794" fill="#1a1a1a" stroke="#1a1a1a" stroke-width="0.22" font-size="16.5" text-anchor="middle" >P</text><text x="603.2" y="770" fill="#111" stroke="#111" stroke-width="0.22" font-size="17" text-anchor="middle" letter-spacing="-0.6">P0005</text><text x="603.3" y="817.3" fill="#3a30ff" stroke="#3a30ff" stroke-width="0.22" font-size="17" text-anchor="middle" >SENS_IN</text><path d="M1603.8 779.7 C1599.5 783 1596.8 786 1596.5 788 C1596.8 790 1599.5 793 1603.8 796.3 M1620.2 779.7 C1624.5 783 1627.2 786 1627.5 788 C1627.2 790 1624.5 793 1620.2 796.3" fill="none" stroke="#1a1a1a" stroke-width="1.4"/><text x="1612" y="794" fill="#1a1a1a" stroke="#1a1a1a" stroke-width="0.22" font-size="16.5" text-anchor="middle" >S</text><text x="1611.2" y="770" fill="#111" stroke="#111" stroke-width="0.22" font-size="17" text-anchor="middle" letter-spacing="-0.6">M0001</text><text x="1611.3" y="817.3" fill="#3a30ff" stroke="#3a30ff" stroke-width="0.22" font-size="17" text-anchor="middle" >PAUSE_SY</text><text x="1611.3" y="836.9" fill="#3a30ff" stroke="#3a30ff" stroke-width="0.22" font-size="17" text-anchor="middle" >STEM</text><line x1="542" y1="787.1" x2="542" y2="934" stroke="#333" stroke-width="2"/><line x1="542" y1="905.5" x2="591.5" y2="905.5" stroke="#1a1a1a" stroke-width="1.6"/><line x1="616.5" y1="905.5" x2="1309" y2="905.5" stroke="#1a1a1a" stroke-width="1.6"/><line x1="1664" y1="905.5" x2="1675" y2="905.5" stroke="#1a1a1a" stroke-width="1.6"/><line x1="591.5" y1="895.0" x2="591.5" y2="917.2" stroke="#1a1a1a" stroke-width="1.5"/><line x1="616.5" y1="895.0" x2="616.5" y2="917.2" stroke="#1a1a1a" stroke-width="1.5"/><text x="603.2" y="887.5" fill="#111" stroke="#111" stroke-width="0.22" font-size="17" text-anchor="middle" letter-spacing="-0.6">M0001</text><text x="603.3" y="934.8" fill="#3a30ff" stroke="#3a30ff" stroke-width="0.22" font-size="17" text-anchor="middle" >PAUSE_SY</text><rect x="1312" y="877" width="354" height="37" fill="#a8a8a8"/><rect x="1309.5" y="875" width="354" height="36" fill="#fff" stroke="#111" stroke-width="1.6"/><text x="1360" y="900" fill="#111" stroke="#111" stroke-width="0.22" font-size="17" text-anchor="middle" >TON</text><text x="1486" y="900" fill="#111" stroke="#111" stroke-width="0.22" font-size="17" text-anchor="middle" letter-spacing="-0.7">T000</text><text x="1612" y="900" fill="#ff00ff" stroke="#ff00ff" stroke-width="0.22" font-size="17" text-anchor="middle" letter-spacing="-0.5">40</text><text x="1486" y="934.5" fill="#3a30ff" stroke="#3a30ff" stroke-width="0.22" font-size="17" text-anchor="middle" >TIMER_WE</text><rect x="310" y="934" width="1562" height="22" fill="#f0f0f0"/><rect x="331" y="935" width="1410" height="18.5" fill="#cdcdcd"/><path d="M324 940 L319 944.5 L324 949" fill="none" stroke="#606060" stroke-width="2"/><path d="M1838 940 L1843 944.5 L1838 949" fill="none" stroke="#606060" stroke-width="2"/><rect x="1852" y="183" width="20" height="751" fill="#f0f0f0"/><rect x="1853" y="214" width="18" height="96" fill="#cdcdcd"/><path d="M1858 207 L1862.5 202.5 L1867 207" fill="none" stroke="#606060" stroke-width="2"/><path d="M1858 921 L1862.5 925.5 L1867 921" fill="none" stroke="#606060" stroke-width="2"/><rect x="1851" y="183" width="21" height="10" fill="#f0f0f0"/><rect x="1851" y="191.5" width="21" height="1.5" fill="#808080"/><rect x="1870.5" y="183" width="1.5" height="10" fill="#808080"/><rect x="1851" y="183" width="1" height="9" fill="#fff"/><rect x="1868" y="943" width="1.5" height="1.5" fill="#9a9a9a"/><rect x="1865" y="946" width="1.5" height="1.5" fill="#9a9a9a"/><rect x="1868" y="946" width="1.5" height="1.5" fill="#9a9a9a"/><rect x="1862" y="949" width="1.5" height="1.5" fill="#9a9a9a"/><rect x="1865" y="949" width="1.5" height="1.5" fill="#9a9a9a"/><rect x="1868" y="949" width="1.5" height="1.5" fill="#9a9a9a"/></svg><svg class="a" style="left:0;top:0" width="1920" height="998" font-family="Liberation Sans, sans-serif"><g transform="translate(4,2)"><circle cx="8" cy="8.5" r="7.2" fill="#3fa8f0"/><path d="M8 1.3A7.2 7.2 0 0 0 0.8 8.5H8Z" fill="#40e8f8"/><circle cx="9" cy="9.5" r="3" fill="#b8e4ff" opacity="0.6"/><path d="M10 11H17V17L15 15L12 19L10 17L13 13L11 11Z" fill="#38b838"/></g><text transform="translate(31.30,18.80) scale(1.0123,1)" font-size="14" fill="#8891a6">Fruit Sorting System Based on Weight and Color - XG5000</text><rect x="1803.5" y="15" width="8" height="2" fill="#bcbec4"/><rect x="1849.5" y="10.5" width="7" height="7" fill="none" stroke="#bcbec4" stroke-width="1.2"/><path d="M1851.5 10.5V8.3H1858.5V15.5H1856.5" fill="none" stroke="#bcbec4" stroke-width="1.2"/><path d="M1894 9L1902.5 17.5M1902.5 9L1894 17.5" stroke="#bcbec4" stroke-width="1.3"/><rect x="0" y="29" width="1920" height="1" fill="#bcc1cc"/><rect x="3.5" y="32.5" width="1.2" height="1.2" fill="#70757f"/><rect x="8.8" y="32.5" width="1.2" height="1.2" fill="#70757f"/><rect x="6.2" y="35.0" width="1.2" height="1.2" fill="#8a8f99"/><rect x="3.5" y="37.5" width="1.2" height="1.2" fill="#70757f"/><rect x="8.8" y="37.5" width="1.2" height="1.2" fill="#70757f"/><rect x="6.2" y="40.0" width="1.2" height="1.2" fill="#8a8f99"/><rect x="3.5" y="42.5" width="1.2" height="1.2" fill="#70757f"/><rect x="8.8" y="42.5" width="1.2" height="1.2" fill="#70757f"/><rect x="6.2" y="45.0" width="1.2" height="1.2" fill="#8a8f99"/><rect x="3.5" y="47.5" width="1.2" height="1.2" fill="#70757f"/><rect x="8.8" y="47.5" width="1.2" height="1.2" fill="#70757f"/><rect x="6.2" y="50.0" width="1.2" height="1.2" fill="#8a8f99"/><rect x="3.5" y="52.5" width="1.2" height="1.2" fill="#70757f"/><rect x="8.8" y="52.5" width="1.2" height="1.2" fill="#70757f"/><text transform="translate(21.60,47.30) scale(0.8324,1)" font-size="14" fill="#1e1e24" stroke="#1e1e24" stroke-width="0.3">PROJECT</text><text transform="translate(96.60,47.30) scale(0.8511,1)" font-size="14" fill="#1e1e24" stroke="#1e1e24" stroke-width="0.3">EDIT</text><text transform="translate(144.40,47.30) scale(0.8832,1)" font-size="14" fill="#1e1e24" stroke="#1e1e24" stroke-width="0.3">FIND/REPLACE</text><text transform="translate(254.00,47.30) scale(0.9218,1)" font-size="14" fill="#1e1e24" stroke="#1e1e24" stroke-width="0.3">VIEW</text><text transform="translate(306.60,47.30) scale(0.9175,1)" font-size="14" fill="#1e1e24" stroke="#1e1e24" stroke-width="0.3">ONLINE</text><text transform="translate(374.00,47.30) scale(0.9552,1)" font-size="14" fill="#1e1e24" stroke="#1e1e24" stroke-width="0.3">MONITOR</text><text transform="translate(457.50,47.30) scale(0.8936,1)" font-size="14" fill="#1e1e24" stroke="#1e1e24" stroke-width="0.3">DEBUG</text><text transform="translate(521.30,47.30) scale(0.8919,1)" font-size="14" fill="#1e1e24" stroke="#1e1e24" stroke-width="0.3">TOOLS</text><text transform="translate(584.00,47.30) scale(1.0090,1)" font-size="14" fill="#1e1e24" stroke="#1e1e24" stroke-width="0.3">WINDOW</text><text transform="translate(665.30,47.30) scale(0.8564,1)" font-size="14" fill="#1e1e24" stroke="#1e1e24" stroke-width="0.3">HELP</text><text transform="translate(20.30,112.30) scale(1.1902,1)" font-size="23" fill="#000" font-weight="bold" stroke="#000" stroke-width="0.8">InstrumentationTools.com</text><rect x="0" y="151" width="294" height="28" fill="#4d6082"/><text transform="translate(5.50,170.00) scale(0.9828,1)" font-size="14" fill="#e8ebf2">Project</text><path d="M227.5 163.3H238.7L233.1 169.9Z" fill="#fff"/><rect x="253.5" y="160.6" width="6" height="5.5" fill="none" stroke="#fff" stroke-width="1.3"/><rect x="256" y="161" width="1.3" height="5" fill="#fff"/><rect x="252" y="166" width="9.3" height="1.4" fill="#fff"/><rect x="256" y="167" width="1.3" height="4.4" fill="#fff"/><path d="M276.4 161.4L284.8 169.7M284.8 161.4L276.4 169.7" stroke="#fff" stroke-width="1.6"/><rect x="0" y="179" width="294" height="218" fill="#fff"/><rect x="22.5" y="181" width="250" height="19.6" fill="#d5dbe8"/><rect x="274" y="181" width="20" height="216" fill="#f0f0f0"/><rect x="275" y="201.5" width="17" height="136" fill="#cdcdcd"/><path d="M279 194L283.2 189.3L287.4 194" fill="none" stroke="#606060" stroke-width="1.8"/><path d="M279 384.5L283.2 389.2L287.4 384.5" fill="none" stroke="#606060" stroke-width="1.8"/><rect x="31" y="201" width="1" height="3" fill="#a8a8a8"/><rect x="31" y="218" width="1" height="80" fill="#a8a8a8"/><rect x="31" y="286" width="1" height="1" fill="#a8a8a8"/><rect x="32" y="275.8" width="11" height="1" fill="#a8a8a8"/><rect x="52.5" y="222" width="1" height="3" fill="#a8a8a8"/><rect x="73.5" y="245" width="1" height="11" fill="#a8a8a8"/><rect x="74" y="255.6" width="11" height="1" fill="#a8a8a8"/><rect x="52.5" y="307" width="1" height="90" fill="#a8a8a8"/><rect x="53" y="318" width="11" height="1" fill="#a8a8a8"/><rect x="73.5" y="349" width="1" height="48" fill="#a8a8a8"/><rect x="74" y="360.6" width="11" height="1" fill="#a8a8a8"/><rect x="74" y="381.8" width="11" height="1" fill="#a8a8a8"/><path d="M14 187.5V194.0H7Z" fill="#5a5a5a"/><path d="M36 209V215.5H29Z" fill="#5a5a5a"/><rect x="38" y="213" width="4" height="1" fill="#a8a8a8"/><path d="M57 230V236.5H50Z" fill="#5a5a5a"/><rect x="59" y="234" width="4" height="1" fill="#a8a8a8"/><path d="M36 294V300.5H29Z" fill="#5a5a5a"/><rect x="38" y="298" width="4" height="1" fill="#a8a8a8"/><path d="M57 336V342.5H50Z" fill="#5a5a5a"/><rect x="59" y="340" width="4" height="1" fill="#a8a8a8"/><g transform="translate(25,182)"><rect x="2" y="0.5" width="15" height="2" fill="#a8d8f0" stroke="#000" stroke-width="1"/><path d="M9.5 2.5V14M4 2.5V6M15 2.5V6" stroke="#000" stroke-width="1.2"/><rect x="0.5" y="6" width="7" height="4" rx="1.5" fill="#40b060" stroke="#000"/><rect x="11.5" y="6" width="7" height="4" rx="1.5" fill="#c8d840" stroke="#000"/><rect x="3" y="12.5" width="13" height="5" rx="1.5" fill="#40d8e8" stroke="#000" stroke-width="1.2"/></g><g transform="translate(46,204)"><rect x="2" y="0.5" width="15" height="2" fill="#a8d8f0" stroke="#000" stroke-width="1"/><path d="M9.5 2.5V14M4 2.5V6M15 2.5V6" stroke="#000" stroke-width="1.2"/><rect x="0.5" y="6" width="7" height="4" rx="1.5" fill="#40b060" stroke="#000"/><rect x="11.5" y="6" width="7" height="4" rx="1.5" fill="#c8d840" stroke="#000"/><rect x="3" y="12.5" width="13" height="5" rx="1.5" fill="#40d8e8" stroke="#000" stroke-width="1.2"/></g><g transform="translate(69,225.5)"><path d="M1 4L4 1H17V13L14 16H1Z" fill="#8ab0e0" stroke="#000" stroke-width="1.3"/><rect x="2" y="4.5" width="11" height="11" fill="#c8dcf4" stroke="#000" stroke-width="0.8"/><path d="M5 7V14M8 7V14" stroke="#5a7ab0" stroke-width="1.2"/><rect x="2.5" y="6" width="1.5" height="8" fill="#2060c0"/></g><g transform="translate(48,289)"><path d="M1 4L4 1H17V13L14 16H1Z" fill="#8ab0e0" stroke="#000" stroke-width="1.3"/><rect x="2" y="4.5" width="11" height="11" fill="#c8dcf4" stroke="#000" stroke-width="0.8"/><path d="M5 7V14M8 7V14" stroke="#5a7ab0" stroke-width="1.2"/><rect x="2.5" y="6" width="1.5" height="8" fill="#2060c0"/></g><g transform="translate(89,244)"><rect x="3" y="0.5" width="8" height="8" rx="1" fill="#c0e8e0" stroke="#000" stroke-width="1.2"/><rect x="0.5" y="8.5" width="13" height="2.5" fill="#60a0b0" stroke="#000" stroke-width="1"/><path d="M12 4H17V16H2V11" fill="none" stroke="#2a70e8" stroke-width="1.2"/><rect x="7" y="13" width="13" height="6" rx="2" fill="#d8e890" stroke="#000" stroke-width="1.2"/></g><g transform="translate(46,266)"><circle cx="11" cy="12" r="6.5" fill="#20a080" stroke="#000" stroke-width="1.2"/><circle cx="9" cy="10" r="1.5" fill="#e02060"/><circle cx="13" cy="14" r="1.5" fill="#3040e0"/><circle cx="14" cy="9" r="1.2" fill="#e02060"/><rect x="0.5" y="0.5" width="10" height="7" rx="1" fill="#fff" stroke="#9020f0" stroke-width="1.3"/><path d="M3 2.5L5.5 5.5L8 2.5" stroke="#f020a0" stroke-width="1" fill="none"/></g><g transform="translate(68,308)"><rect x="3" y="6" width="15" height="10" fill="#c8dcf4" stroke="#000" stroke-width="1.3"/><path d="M6 14L15 8" stroke="#fff" stroke-width="1.5"/><rect x="4" y="16" width="2" height="2" fill="#000"/><rect x="9" y="16" width="2" height="2" fill="#000"/><rect x="14" y="16" width="2" height="2" fill="#000"/><rect x="15" y="4" width="2" height="2" fill="#000"/><rect x="0.5" y="0.5" width="10" height="7" rx="1" fill="#fff" stroke="#20a040" stroke-width="1.3"/><path d="M3 2.5L5.5 5.5L8 2.5" stroke="#f02040" stroke-width="1" fill="none"/></g><g transform="translate(68,329)"><rect x="1.5" y="2.5" width="13" height="13" fill="#e0ecf8" stroke="#000" stroke-width="1.4"/><path d="M8 9Q8 6 10 6Q11 6 11 8V10L13 10Q15 11 15 13Q15 17 12 18H9Q7 17 6 13Z" fill="#f8e0c0" stroke="#333" stroke-width="0.8"/></g><g transform="translate(90,352)"><path d="M0.5 3V0.5H3M14 0.5H16.5V3M16.5 14V16.5H14M3 16.5H0.5V14" stroke="#20b020" stroke-width="1.3" fill="none"/><rect x="3" y="3" width="11" height="11" fill="#b8cce0" stroke="#000" stroke-width="1.4"/><path d="M6 6H10L12 8V12H6Z" fill="#fff" stroke="#000" stroke-width="1"/></g><g transform="translate(90,373.5)"><path d="M0.5 3V0.5H3M14 0.5H16.5V3M16.5 14V16.5H14M3 16.5H0.5V14" stroke="#20b020" stroke-width="1.3" fill="none"/><rect x="3" y="3" width="11" height="11" fill="#b8cce0" stroke="#000" stroke-width="1.4"/><path d="M5 6L9 9M5 6V8.5M5 6H7.5" stroke="#e02050" stroke-width="1.3" fill="none"/><rect x="11" y="7" width="5" height="6" fill="#fff" stroke="#000" stroke-width="1.2"/></g><g transform="translate(90,395)"><path d="M0.5 3V0.5H3M14 0.5H16.5V3" stroke="#20b020" stroke-width="1.3" fill="none"/></g><text transform="translate(49.40,196.00) scale(0.9320,1)" font-size="14" fill="#1e1e2a" stroke="#1e1e2a" stroke-width="0.2">Fruit Sorting System Based on Wei...</text><text transform="translate(70.60,217.20) scale(0.9343,1)" font-size="14" fill="#1e1e2a" stroke="#1e1e2a" stroke-width="0.2">Network Configuration</text><text transform="translate(91.90,238.10) scale(0.9446,1)" font-size="14" fill="#1e1e2a" stroke="#1e1e2a" stroke-width="0.2">Undefined Network</text><text transform="translate(112.70,259.50) scale(0.9425,1)" font-size="14" fill="#1e1e2a" stroke="#1e1e2a" stroke-width="0.2">NewPLC [B0S0 Internal ...</text><text transform="translate(70.30,280.10) scale(0.9197,1)" font-size="14" fill="#1e1e2a" stroke="#1e1e2a" stroke-width="0.2">System Variable</text><text transform="translate(70.90,301.90) scale(1.0456,1)" font-size="14" fill="#000" font-weight="bold">NewPLC(XBC-DxxxE)-Offli...</text><text transform="translate(91.50,323.30) scale(0.9312,1)" font-size="14" fill="#1e1e2a" stroke="#1e1e2a" stroke-width="0.2">Variable/Comment</text><text transform="translate(91.50,344.50) scale(0.9120,1)" font-size="14" fill="#1e1e2a" stroke="#1e1e2a" stroke-width="0.2">Parameter</text><text transform="translate(112.70,365.70) scale(0.9275,1)" font-size="14" fill="#1e1e2a" stroke="#1e1e2a" stroke-width="0.2">Basic Parameter</text><text transform="translate(112.70,386.90) scale(0.9511,1)" font-size="14" fill="#1e1e2a" stroke="#1e1e2a" stroke-width="0.2">I/O Parameter</text><rect x="0" y="397" width="294" height="29" fill="#4d6082"/><rect x="0" y="397" width="58.5" height="27" fill="#fbfbfc"/><rect x="0" y="397" width="1" height="27" fill="#c8ccd4"/><text transform="translate(7.90,415.40) scale(0.9943,1)" font-size="14" fill="#3d6bc0">Project</text><text transform="translate(68.00,415.40) scale(1.0296,1)" font-size="14" fill="#e8ebf2">View High-speed Link</text><text transform="translate(224.00,415.40) scale(0.9545,1)" font-size="14" fill="#e8ebf2">View P2P</text><rect x="0" y="434" width="294" height="27" fill="#4d6082"/><text transform="translate(5.30,452.60) scale(1.0384,1)" font-size="14" fill="#e8ebf2">Function/FB</text><path d="M227.5 445.7H238.7L233.1 452.29999999999995Z" fill="#fff"/><rect x="253.5" y="443.0" width="6" height="5.5" fill="none" stroke="#fff" stroke-width="1.3"/><rect x="256" y="443.4" width="1.3" height="5" fill="#fff"/><rect x="252" y="448.4" width="9.3" height="1.4" fill="#fff"/><rect x="256" y="449.4" width="1.3" height="4.4" fill="#fff"/><path d="M276.4 443.79999999999995L284.8 452.09999999999997M284.8 443.79999999999995L276.4 452.09999999999997" stroke="#fff" stroke-width="1.6"/><rect x="0" y="461" width="294" height="503" fill="#f0f0f0"/><rect x="0" y="496" width="1.2" height="467" fill="#8a8a8a"/><rect x="0" y="462.4" width="239" height="26.3" fill="#cccccc"/><path d="M222.8 473.8L227.4 478.6L232 473.8" fill="none" stroke="#a8a8a8" stroke-width="1.2"/><text transform="translate(4.30,480.80) scale(0.9445,1)" font-size="14" fill="#8a8a8a">Most Recently Used</text><rect x="242.7" y="464" width="49.3" height="25" fill="#cccccc"/><rect x="243.2" y="464.5" width="48.3" height="24" fill="none" stroke="#c4c4c4"/><text transform="translate(255.30,482.50) scale(0.9585,1)" font-size="14" fill="#8a8a8a">Edit</text><rect x="1" y="495" width="288" height="32" fill="#fff"/><rect x="0" y="495" width="293" height="1" fill="#a0a0a0"/><rect x="1" y="495" width="1" height="32" fill="#a0a0a0"/><rect x="287.5" y="496" width="1" height="31" fill="#e8e8e8"/><text transform="translate(9.10,517.50) scale(0.9300,1)" font-size="14" fill="#111">Function Name</text><path d="M301 177L323.7 154.6H460.3V177Z" fill="#fff"/><path d="M460.5 176.5V155.5L463 154.5H605.5V176.5Z" fill="#ccd4e3" stroke="#8e9ab2" stroke-width="1"/><path d="M606 176.5V155.5L608.5 154.5H782.7V176.5Z" fill="#ccd4e3" stroke="#8e9ab2" stroke-width="1"/><path d="M459 154L466 154L461.5 158.5Z" fill="#293955"/><path d="M604 154L611 154L606.5 158.5Z" fill="#293955"/><rect x="460.5" y="176.5" width="322" height="1" fill="#fff"/><text transform="translate(342.90,169.60) scale(0.9890,1)" font-size="14" fill="#111" font-weight="bold">NewProgram</text><text transform="translate(485.20,169.90) scale(0.9875,1)" font-size="14" fill="#222">I/O Parameter</text><text transform="translate(631.30,169.90) scale(1.0174,1)" font-size="14" fill="#222">Variable/Comment</text><path d="M445.5 162L453.5 169.8M453.5 162L445.5 169.8" stroke="#6e6e6e" stroke-width="1.6"/><path d="M590.1 162L598.9 169.8M598.9 162L590.1 169.8" stroke="#6e6e6e" stroke-width="1.6"/><path d="M767.3 162L776.1 169.8M776.1 162L767.3 169.8" stroke="#6e6e6e" stroke-width="1.6"/><path d="M1863.7 162.4H1875.1L1869.4 168.4Z" fill="#fff"/><rect x="1912" y="160" width="8" height="106" fill="#4d6082"/><rect x="1912" y="272.5" width="8" height="113.5" fill="#4d6082"/><text transform="translate(1891.8,163.00) rotate(90) scale(0.9646,1)" font-size="15.5" fill="#e8ebf2">System catalog</text><text transform="translate(1891.8,275.60) rotate(90) scale(0.9739,1)" font-size="15.5" fill="#e8ebf2">EDS information</text><rect x="9.1" y="992.5" width="42.20" height="6" fill="#4d6082"/><text transform="translate(11.70,983.80) scale(0.9849,1)" font-size="14" fill="#f2f4f8">Result</text><rect x="57.3" y="992.5" width="98.95" height="6" fill="#4d6082"/><text transform="translate(60.40,983.80) scale(0.9799,1)" font-size="14" fill="#f2f4f8">Check Program</text><rect x="162.8" y="992.5" width="42.20" height="6" fill="#4d6082"/><text transform="translate(165.40,983.80) scale(1.0026,1)" font-size="14" fill="#f2f4f8">Find 1</text><rect x="211" y="992.5" width="42.90" height="6" fill="#4d6082"/><text transform="translate(214.00,983.80) scale(1.0257,1)" font-size="14" fill="#f2f4f8">Find 2</text><rect x="260" y="992.5" width="103.80" height="6" fill="#4d6082"/><text transform="translate(263.00,983.80) scale(1.0314,1)" font-size="14" fill="#f2f4f8">Communication</text><rect x="369.8" y="992.5" width="105.50" height="6" fill="#4d6082"/><text transform="translate(373.00,983.80) scale(0.9662,1)" font-size="14" fill="#f2f4f8">Cross Reference</text><rect x="481.1" y="992.5" width="79.90" height="6" fill="#4d6082"/><text transform="translate(484.20,983.80) scale(0.9679,1)" font-size="14" fill="#f2f4f8">Used Device</text><rect x="567.2" y="992.5" width="93.05" height="6" fill="#4d6082"/><text transform="translate(570.20,983.80) scale(1.0428,1)" font-size="14" fill="#f2f4f8">Duplicate Coil</text><rect x="684.6" y="992.5" width="66.50" height="6" fill="#4d6082"/><text transform="translate(687.30,983.80) scale(1.0831,1)" font-size="14" fill="#f2f4f8">Monitor 1</text><rect x="757.2" y="992.5" width="66.80" height="6" fill="#4d6082"/><text transform="translate(760.40,983.80) scale(1.0900,1)" font-size="14" fill="#f2f4f8">Monitor 2</text><rect x="830" y="992.5" width="66.00" height="6" fill="#4d6082"/><text transform="translate(833.10,983.80) scale(1.0780,1)" font-size="14" fill="#f2f4f8">Monitor 3</text><rect x="902.1" y="992.5" width="66.80" height="6" fill="#4d6082"/><text transform="translate(905.20,983.80) scale(1.0917,1)" font-size="14" fill="#f2f4f8">Monitor 4</text><text transform="translate(1346.50,991.20) scale(1.0886,1)" font-size="25" fill="#000" font-weight="bold" stroke="#000" stroke-width="0.9">Inst Tools</text></svg></body></html>
